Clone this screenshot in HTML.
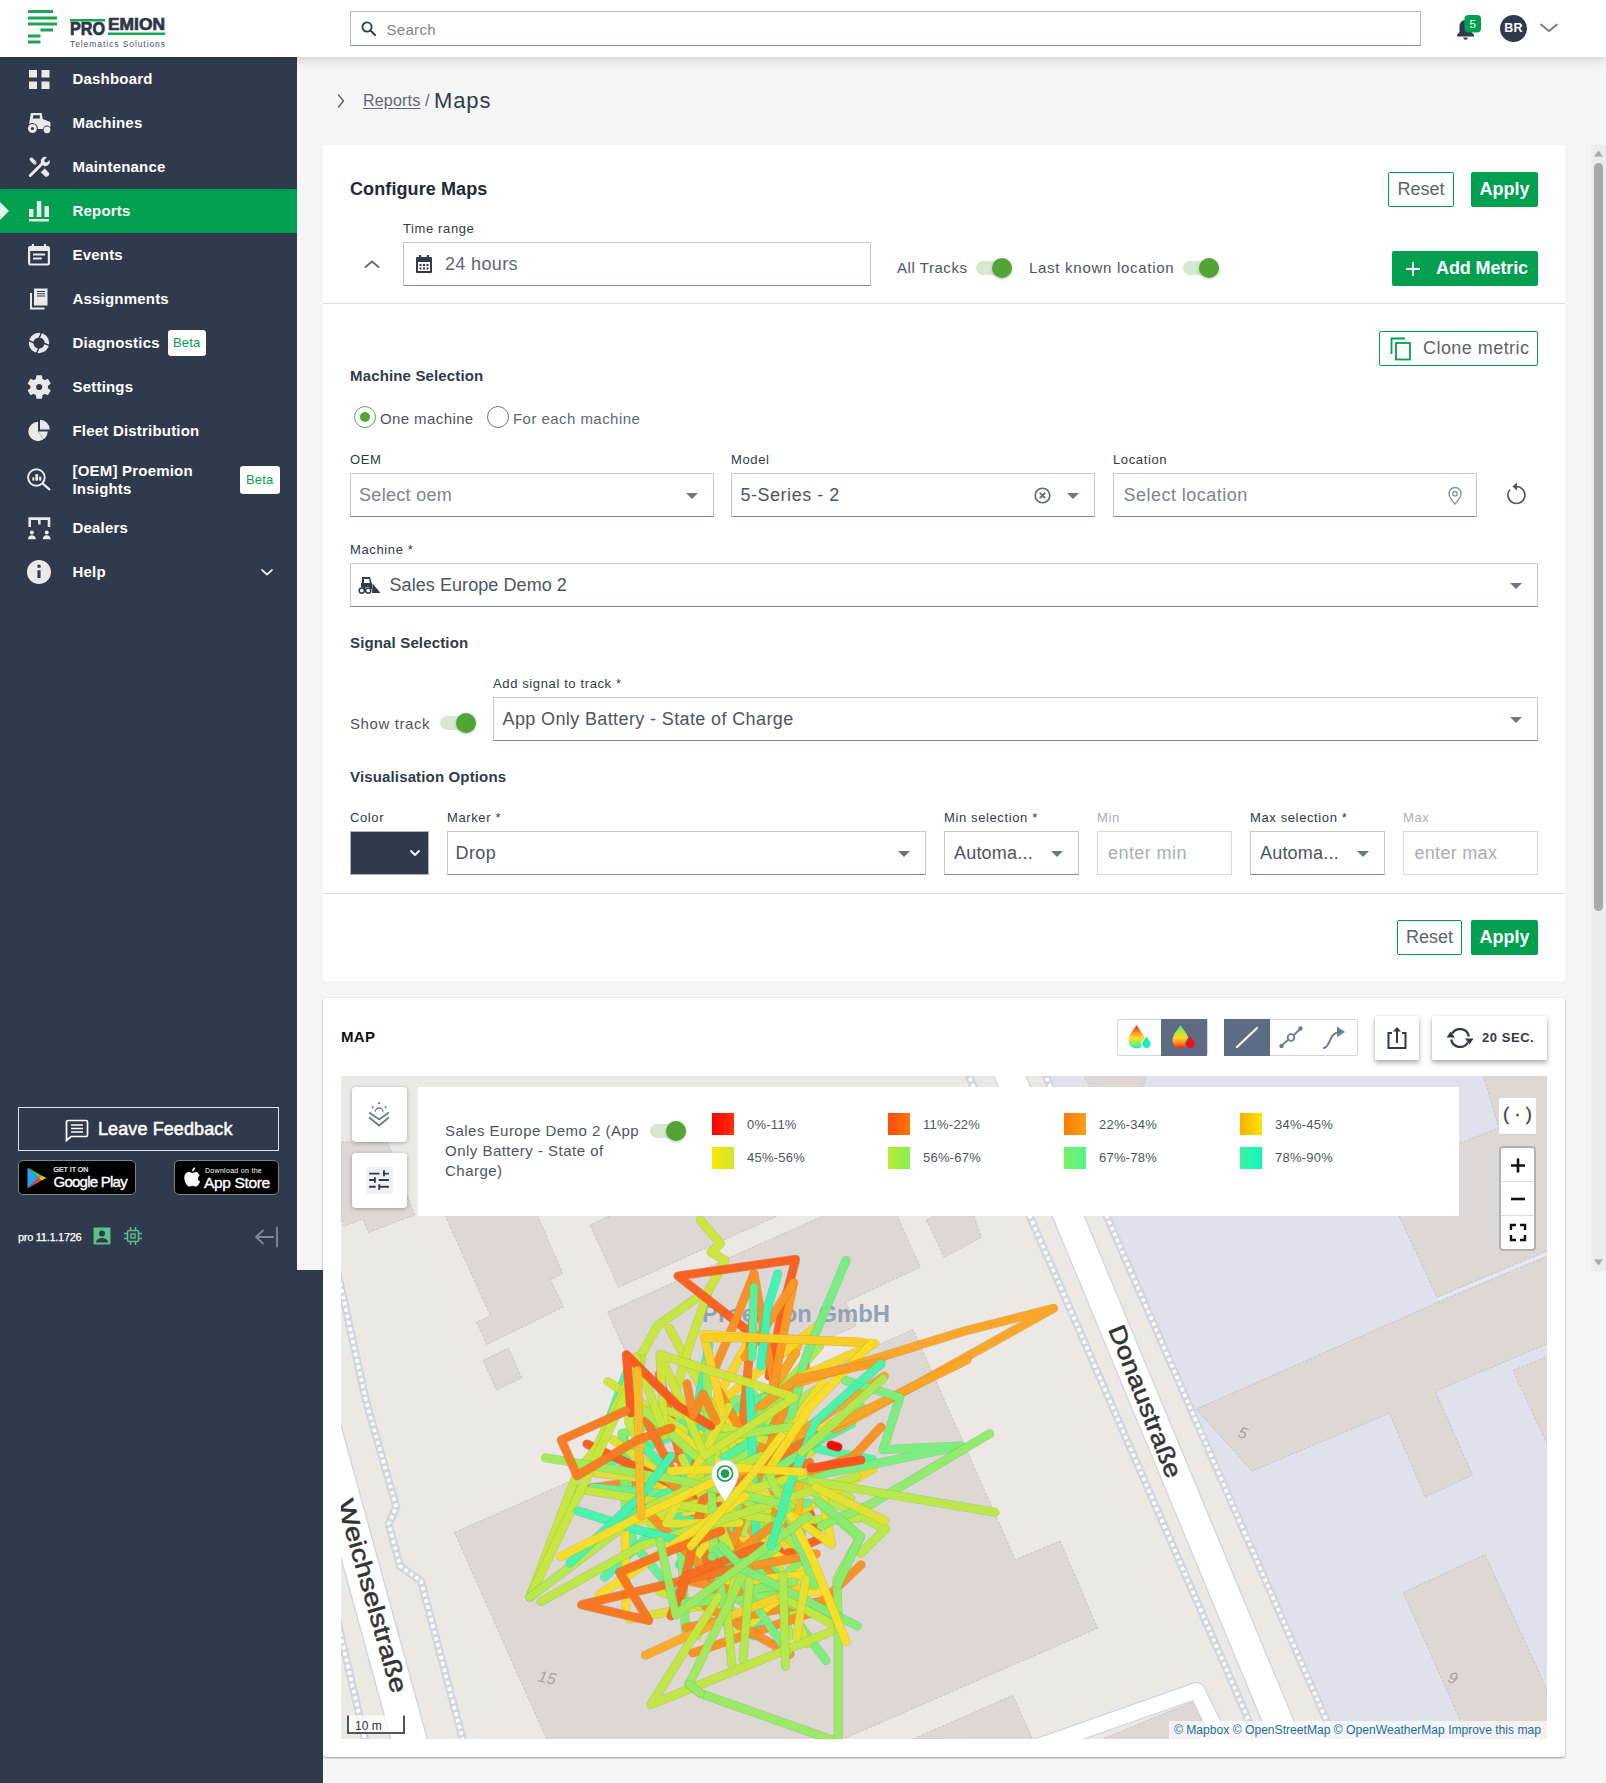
<!DOCTYPE html>
<html lang="en"><head><meta charset="utf-8"><title>Maps</title>
<style>
*{box-sizing:border-box;margin:0;padding:0}
html,body{width:1606px;height:1783px;overflow:hidden;background:#f5f5f5;font-family:"Liberation Sans",sans-serif;color:#2f3b4c}
.abs{position:absolute}
#hdr{position:absolute;left:0;top:0;width:1606px;height:57px;background:#fff;box-shadow:0 2px 10px rgba(0,0,0,.16);z-index:5}
#side{position:absolute;left:0;top:57px;width:297px;height:1213px;background:#2f3b4c;z-index:4}
#side2{position:absolute;left:0;top:1270px;width:323px;height:513px;background:#2f3b4c;z-index:4}
.nav{position:absolute;left:0;width:297px;height:44px;color:#fff;font-weight:700;font-size:15px;letter-spacing:.2px}
.nav span.t{position:absolute;left:72.5px;top:13px;line-height:18px;white-space:nowrap}
.nav svg{position:absolute;left:27px;top:10px;width:24px;height:24px;fill:#e9e9ea}
.nav.act{background:#00a050}
.beta{position:absolute;background:#fff;color:#00a050;font-weight:400;font-size:13px;border-radius:3px;height:26px;line-height:26px;padding:0 5px}
#search{position:absolute;left:350px;top:11px;width:1071px;height:35px;border:1px solid #b5bcc6;border-bottom-color:#7c8797;background:#fff}
#search span{position:absolute;left:35.500px;top:8.500px;font-size:15px;color:#7b8594;letter-spacing:.3px}
.card{position:absolute;background:#fff}
.lbl{position:absolute;font-size:13px;color:#2f3b4c;line-height:16px;white-space:nowrap;letter-spacing:.62px;margin-top:.5px}
.sec{position:absolute;font-size:15px;font-weight:700;color:#2f3b4c;line-height:18px;white-space:nowrap;letter-spacing:.15px}
.fld{position:absolute;height:44px;border:1px solid #c3c9d2;border-bottom:1px solid #7c8797;background:#fff;font-size:18px;color:#4b5566;line-height:42px;padding-left:9px;white-space:nowrap;letter-spacing:.2px}
.fld.ph{color:#7b8594}
.fld.dis{border-color:#d5d9e0;color:#a7aeb9}
.caret{position:absolute;width:0;height:0;border-left:6px solid transparent;border-right:6px solid transparent;border-top:6px solid #6b7686}
.tog{position:absolute;width:36px;height:14px;border-radius:7px;background:#d6e9cf}
.tog i{position:absolute;right:.5px;top:-3px;width:20px;height:20px;border-radius:50%;background:#52a535;box-shadow:0 1px 3px rgba(0,0,0,.25)}
.btn{position:absolute;height:35px;border-radius:2px;font-size:18px;line-height:33px;text-align:center;white-space:nowrap}
.btn.o{border:1px solid #00a050;color:#5a6474;background:#fff}
.btn.g{background:#00a050;color:#fff;font-weight:700;line-height:35px}
</style></head><body>
<div id="hdr">
<svg class="abs" style="left:0;top:0" width="180" height="57" viewBox="0 0 180 57">
<g fill="#1aa651"><rect x="28" y="10" width="25" height="3"/><rect x="28" y="16.5" width="29" height="3"/><rect x="28" y="22.5" width="29" height="3"/><rect x="40.5" y="28.5" width="12.5" height="3"/><rect x="28" y="34.500" width="12.500" height="3"/><rect x="28" y="40.5" width="12.5" height="3"/>
<rect x="70" y="19" width="35" height="2.5"/><rect x="108" y="32.500" width="57" height="2.500"/></g>
<text x="70" y="35" font-family="Liberation Sans,sans-serif" font-weight="700" font-size="17.500" fill="#2b3648" stroke="#2b3648" stroke-width=".7" textLength="35" lengthAdjust="spacingAndGlyphs">PRO</text>
<text x="108" y="30.300" font-family="Liberation Sans,sans-serif" font-weight="700" font-size="17" fill="#2b3648" stroke="#2b3648" stroke-width=".7" textLength="57" lengthAdjust="spacingAndGlyphs">EMION</text>
<text x="70" y="46.500" font-family="Liberation Sans,sans-serif" font-size="8.500" fill="#4a5363" textLength="95" lengthAdjust="spacing">Telematics Solutions</text>
</svg>

<div id="search"><svg class="abs" style="left:9px;top:8px" width="17" height="17" viewBox="0 0 17 17"><circle cx="7" cy="7" r="4.6" fill="none" stroke="#2f3b4c" stroke-width="1.8"/><path d="M10.4 10.4L15 15" stroke="#2f3b4c" stroke-width="2" stroke-linecap="round"/></svg><span>Search</span></div>
<svg class="abs" style="left:1450px;top:10px" width="40" height="36" viewBox="0 0 40 36">
<path d="M15.500 10c-3.800 0-6 3-6 6.500v5.500l-2.500 3v1.500h17V25l-2.500-3v-5.500c0-3.500-2.200-6.500-6-6.500zM13.300 27.500a2.200 2.200 0 0 0 4.400 0z" fill="#2f3b4c"/>
<rect x="14.500" y="5" width="16.500" height="17.500" rx="4" fill="#00a050"/>
<text x="22.750" y="18" text-anchor="middle" font-family="Liberation Sans,sans-serif" font-size="11.500" fill="#fff">5</text>
</svg>
<div class="abs" style="left:1500px;top:14.500px;width:27px;height:27px;border-radius:50%;background:#2f3b4c;color:#fff;font-weight:700;font-size:12.500px;line-height:27px;text-align:center;letter-spacing:.2px">BR</div>
<svg class="abs" style="left:1538px;top:20px" width="22" height="16" viewBox="0 0 22 16"><path d="M3 4.500l8 6.500 8-6.500" fill="none" stroke="#6f7a8a" stroke-width="1.800" stroke-linecap="round" stroke-linejoin="round"/></svg>

</div>
<div id="side">
<div class="nav" style="top:0"><svg viewBox="0 0 24 24"><rect x="2" y="3" width="8" height="7.500"/><rect x="14.500" y="3" width="8" height="7.500"/><rect x="2" y="14.500" width="8" height="7.500"/><rect x="14.500" y="14.500" width="8" height="7.500"/></svg><span class="t">Dashboard</span></div>
<div class="nav" style="top:44px"><svg viewBox="0 0 24 24"><path d="M3.900 1.900h10.800l1 6 7.600 3.100.2 4.700h-.8a4.100 4.100 0 0 0-6.800 2.300H10.800a5.500 5.500 0 0 0-8.800-4.800zM6.400 4.200L5.800 7.600h7v-3.400z" fill-rule="evenodd"/><circle cx="5.400" cy="17.500" r="3.050" fill="none" stroke="#e9e9ea" stroke-width="2.900"/><circle cx="20" cy="18.800" r="3.400"/></svg><span class="t">Machines</span></div>
<div class="nav" style="top:88px"><svg viewBox="0 0 24 24"><path d="M3.300 20.500L15.600 8.200" stroke="#e9e9ea" stroke-width="3" stroke-linecap="round"/><path d="M13.800 7.800a4.700 4.700 0 0 1 6.200-5.600l-2.700 2.900.5 2 2 .5 2.800-2.700a4.700 4.700 0 0 1-5.600 6.100z"/><path d="M4.400 4.400l3.300 3.300" stroke="#e9e9ea" stroke-width="3.700" stroke-linecap="round"/><path d="M13.700 17.200l4-3.600 4.700 4.600-.9 2.700-2.700 1.200z"/></svg><span class="t">Maintenance</span></div>
<div class="nav act" style="top:132px"><svg class="abs" style="left:0;top:10px;width:10px;height:24px" viewBox="0 0 10 24"><path d="M0 3l9 9-9 9z" fill="#e6f5ec"/></svg><svg viewBox="0 0 24 24"><rect x="2" y="10" width="4.500" height="8"/><rect x="9.800" y="2" width="4.500" height="16"/><rect x="17.500" y="7" width="4.500" height="11"/><rect x="2" y="20" width="20" height="2.500"/></svg><span class="t">Reports</span></div>
<div class="nav" style="top:176px"><svg viewBox="0 0 24 24"><path transform="translate(12 0) scale(1.100 1) translate(-12 0)" d="M17.500 10.500H6.500v2h11zM20 3h-1.500V1h-2v2h-9V1h-2v2H4c-1.100 0-2 .9-2 2v15.500c0 1.100.9 2 2 2h16c1.100 0 2-.9 2-2V5c0-1.100-.9-2-2-2zm0 17.500H4V8h16zm-5.500-6H6.500v2h8z"/></svg><span class="t">Events</span></div>
<div class="nav" style="top:220px"><svg viewBox="0 0 24 24"><path d="M7 1.500h13.500v17H7zM10 4v1h8V4zm0 2.200v1h8v-1zm0 2.200v1h8v-1z" fill-rule="evenodd"/><path d="M3 6h2v14.500h12.500v2H3z"/></svg><span class="t">Assignments</span></div>
<div class="nav" style="top:264px"><svg viewBox="0 0 24 24"><circle cx="12" cy="12" r="7.900" fill="none" stroke="#e9e9ea" stroke-width="4.600"/><path d="M12.00 7.50L14.78 0.84M16.50 12.00L23.16 14.78M12.00 16.50L9.22 23.16M7.50 12.00L0.84 9.22" stroke="#2f3b4c" stroke-width="1.400" fill="none"/></svg><span class="t">Diagnostics</span><span class="beta" style="left:168px;top:9px">Beta</span></div>
<div class="nav" style="top:308px"><svg viewBox="0 0 24 24" style="overflow:visible"><path d="M9.50 4.15L9.95 0.93L14.45 0.93L14.90 4.15L17.65 5.74L20.66 4.51L22.92 8.41L20.35 10.42L20.35 13.58L22.92 15.59L20.66 19.49L17.65 18.26L14.90 19.85L14.45 23.07L9.95 23.07L9.50 19.85L6.75 18.26L3.74 19.49L1.48 15.59L4.05 13.58L4.05 10.42L1.48 8.41L3.74 4.51L6.75 5.74zM15.900 12a3.700 3.700 0 1 0-7.400 0 3.700 3.700 0 1 0 7.400 0z" fill-rule="evenodd" stroke="#e9e9ea" stroke-width="1.200" stroke-linejoin="round"/></svg><span class="t">Settings</span></div>
<div class="nav" style="top:352px"><svg viewBox="0 0 24 24" style="overflow:visible"><path d="M11 12.500V2.800A9.700 9.700 0 1 0 20.700 12.500z"/><path d="M13 10.500V.8A9.700 9.700 0 0 1 22.700 10.500z"/><path d="M11 12.500l5.700 8" stroke="#2f3b4c" stroke-width=".5" opacity=".6"/></svg><span class="t">Fleet Distribution</span></div>
<div class="nav" style="top:396px;height:53px"><svg viewBox="0 0 24 24" style="top:15px;overflow:visible"><circle cx="9.400" cy="9.500" r="8.300" fill="none" stroke="#e9e9ea" stroke-width="2"/><path d="M15.800 15.600l6.600 5.800" stroke="#e9e9ea" stroke-width="2.200" stroke-linecap="round"/><rect x="5.300" y="9.300" width="2" height="3.300"/><rect x="8.300" y="6.100" width="2.800" height="6.500"/><rect x="12.100" y="8.600" width="2.200" height="4"/></svg><span class="t" style="top:9px;white-space:normal;width:150px">[OEM] Proemion Insights</span><span class="beta" style="left:240px;top:13px;height:28px;line-height:28px;padding:0 6px">Beta</span></div>
<div class="nav" style="top:449px"><svg viewBox="0 0 24 24" style="overflow:visible"><path d="M1.400 1.300h21.900V11h-2.600V3.900h-7.100v4.500h-2.500V3.900H4V11H1.400z"/><circle cx="4.900" cy="16.600" r="2"/><path d="M1 23.200c0-3 1.800-4 3.900-4s3.900 1 3.900 4z"/><circle cx="19.700" cy="16.600" r="2"/><path d="M15.800 23.200c0-3 1.800-4 3.900-4s3.900 1 3.900 4z"/></svg><span class="t">Dealers</span></div>
<div class="nav" style="top:493px"><svg viewBox="0 0 24 24"><path transform="translate(12 12) scale(1.200) translate(-12 -12)" d="M12 2C6.480 2 2 6.480 2 12s4.480 10 10 10 10-4.480 10-10S17.520 2 12 2zm1.300 15h-2.600v-6.500h2.600zm0-8.500h-2.600V6h2.600z"/></svg><span class="t">Help</span><svg style="left:258px;top:13px;width:18px;height:18px;fill:none" viewBox="0 0 18 18"><path d="M4 7l5 4.500L14 7" stroke="#e9e9ea" stroke-width="1.700" stroke-linecap="round" stroke-linejoin="round"/></svg></div>
<div class="abs" style="left:18px;top:1050px;width:261px;height:44px;border:1px solid #dfe2e6;color:#fff;font-size:18px;font-weight:700;line-height:42px;white-space:nowrap"><svg class="abs" style="left:46px;top:10px" width="24" height="24" viewBox="0 0 24 24"><path d="M3 2.500h18c.8 0 1.500.7 1.500 1.500v13c0 .8-.7 1.500-1.500 1.500H6l-4.500 4V4c0-.8.700-1.500 1.500-1.500z" fill="none" stroke="#fff" stroke-width="1.700"/><path d="M6 7h12M6 10.500h12M6 14h12" stroke="#fff" stroke-width="1.500"/></svg><span class="abs" style="left:79px;top:0;font-weight:400;-webkit-text-stroke:.5px #fff;letter-spacing:.1px">Leave Feedback</span></div>
<div class="abs" style="left:18px;top:1103px;width:118px;height:35px;background:#000;border:1px solid #7e8186;border-radius:5px;color:#fff"><svg class="abs" style="left:7px;top:5px" width="22" height="24" viewBox="0 0 22 24"><path d="M1.500 1.500l11 10.500-11 10.500z" fill="#2ea0f5"/><path d="M1.500 1.500l14 8-3 2.500z" fill="#3bd05a"/><path d="M1.500 22.500l14-8-3-2.500z" fill="#ea4335"/><path d="M15.500 9.500l5 2.500-5 2.500-3-2.500z" fill="#fbbc04"/></svg><span class="abs" style="left:34.500px;top:4px;font-size:7px;line-height:9px;letter-spacing:0;white-space:nowrap;-webkit-text-stroke:.2px #fff">GET IT ON</span><span class="abs" style="left:34.500px;top:10.500px;font-size:15px;line-height:19px;white-space:nowrap;letter-spacing:-.75px;-webkit-text-stroke:.35px #fff">Google Play</span></div>
<div class="abs" style="left:174px;top:1103px;width:105px;height:35px;background:#000;border:1px solid #7e8186;border-radius:5px;color:#fff"><svg class="abs" style="left:5.500px;top:4px" width="22" height="26.400" viewBox="0 0 20 24"><path d="M13.800 6.300c-1.400 0-2.600.9-3.300.9-.8 0-1.900-.8-3.200-.8C5 6.400 3 8.300 3 11.700c0 3.800 2.600 8 4.500 8 .9 0 1.700-.8 2.900-.8 1.200 0 1.700.8 2.900.8 1.800 0 3.500-3 4-4.700-2-.8-2.800-3.800-.3-5.500-.8-1.600-2.200-3.200-3.200-3.200zM12.800 2c-1.800.4-2.900 1.900-2.700 3.800 1.700-.1 3-1.900 2.700-3.800z" fill="#fff"/></svg><span class="abs" style="left:30px;top:5px;font-size:7px;line-height:9px;letter-spacing:.3px;white-space:nowrap">Download on the</span><span class="abs" style="left:29px;top:11.500px;font-size:15.500px;line-height:19px;white-space:nowrap;letter-spacing:-.35px;-webkit-text-stroke:.35px #fff">App Store</span></div>
<div class="abs" style="left:18px;top:1173px;font-size:11px;line-height:14px;color:#fff;white-space:nowrap;letter-spacing:-.28px;-webkit-text-stroke:.25px #fff">pro 11.1.1726</div>
<svg class="abs" style="left:93px;top:1170px" width="18" height="18" viewBox="0 0 18 18"><rect x=".5" y=".5" width="17" height="17" rx="1" fill="#5bc08a"/><circle cx="9" cy="6.500" r="3" fill="#2f3b4c"/><path d="M3 15.500c0-3 3-4.500 6-4.500s6 1.500 6 4.500z" fill="#2f3b4c"/></svg>
<svg class="abs" style="left:124px;top:1170px" width="18" height="18" viewBox="0 0 18 18" fill="none" stroke="#5bc08a"><rect x="3.500" y="3.500" width="11" height="11" rx="1.500" stroke-width="1.600"/><rect x="7" y="7" width="4" height="4" stroke-width="1.400"/><path d="M6.500 0v3M11.500 0v3M6.500 15v3M11.500 15v3M0 6.500h3M0 11.500h3M15 6.500h3M15 11.500h3" stroke-width="1.400"/></svg>
<svg class="abs" style="left:253px;top:1169px" width="26" height="22" viewBox="0 0 26 22"><path d="M3 11h17M3 11l7-6.500M3 11l7 6.500M24 1.500v19" fill="none" stroke="#7f8a99" stroke-width="1.800" stroke-linecap="round"/></svg>

</div>
<div id="side2"></div>
<!-- breadcrumb -->
<svg class="abs" style="left:334px;top:92px" width="14" height="18" viewBox="0 0 14 18"><path d="M4.500 3l5 6-5 6" fill="none" stroke="#5d6878" stroke-width="1.500" stroke-linecap="round" stroke-linejoin="round"/></svg>
<div class="abs" style="left:363px;top:91px;font-size:16px;line-height:20px;color:#5d6878;white-space:nowrap;letter-spacing:.2px"><span style="text-decoration:underline;text-underline-offset:2px">Reports</span> /</div>
<div class="abs" style="left:434px;top:87px;font-size:22px;line-height:28px;color:#2f3b4c;white-space:nowrap;letter-spacing:.9px">Maps</div>
<!-- card 1 -->
<div class="card" style="left:323px;top:145px;width:1242px;height:836px"></div>
<div class="abs" style="left:323px;top:303px;width:1242px;height:1px;background:#d9dee5"></div>
<div class="abs" style="left:323px;top:893px;width:1242px;height:1px;background:#d9dee5"></div>
<div class="abs" style="left:350px;top:178px;font-size:18px;font-weight:700;line-height:22px;color:#1f2a3a;white-space:nowrap;letter-spacing:.1px">Configure Maps</div>
<div class="btn o" style="left:1388px;top:172px;width:66px">Reset</div>
<div class="btn g" style="left:1471px;top:172px;width:67px">Apply</div>
<div class="lbl" style="left:403px;top:220px">Time range</div>
<svg class="abs" style="left:362px;top:256px" width="20" height="16" viewBox="0 0 20 16"><path d="M3.500 11l6.500-5.500 6.500 5.500" fill="none" stroke="#5d6878" stroke-width="1.700" stroke-linecap="round" stroke-linejoin="round"/></svg>
<div class="fld" style="left:403px;top:242px;width:468px;padding-left:41px;color:#5d6878;letter-spacing:.35px">24 hours<svg class="abs" style="left:11px;top:11px" width="18" height="20" viewBox="0 0 18 20"><path d="M2 3h14a1 1 0 0 1 1 1v14a1 1 0 0 1-1 1H2a1 1 0 0 1-1-1V4a1 1 0 0 1 1-1zm1 5v9h12V8z" fill="#2f3b4c" fill-rule="evenodd"/><rect x="4" y="1" width="2.200" height="3.500" fill="#2f3b4c"/><rect x="11.800" y="1" width="2.200" height="3.500" fill="#2f3b4c"/><g fill="#2f3b4c"><rect x="4.500" y="10" width="2" height="2"/><rect x="8" y="10" width="2" height="2"/><rect x="11.500" y="10" width="2" height="2"/><rect x="4.500" y="13.500" width="2" height="2"/><rect x="8" y="13.500" width="2" height="2"/><rect x="11.500" y="13.500" width="2" height="2"/></g></svg></div>
<div class="abs" style="left:897px;top:259px;font-size:15px;line-height:18px;color:#4b5566;white-space:nowrap;letter-spacing:.55px">All Tracks</div>
<div class="tog" style="left:976px;top:261px"><i></i></div>
<div class="abs" style="left:1029px;top:259px;font-size:15px;line-height:18px;color:#4b5566;white-space:nowrap;letter-spacing:.72px">Last known location</div>
<div class="tog" style="left:1183px;top:261px"><i></i></div>
<div class="btn g" style="left:1392px;top:251px;width:146px;text-align:left;padding-left:44px;letter-spacing:-.1px">Add Metric<svg class="abs" style="left:12px;top:9px" width="18" height="18" viewBox="0 0 18 18"><path d="M9 2v14M2 9h14" stroke="#fff" stroke-width="1.800"/></svg></div>
<div class="btn o" style="left:1379px;top:331px;width:159px;height:35px;text-align:left;padding-left:43px;letter-spacing:.45px">Clone metric<svg class="abs" style="left:10px;top:5px" width="22" height="24" viewBox="0 0 22 24"><path d="M1.500 17V1.500H15" fill="none" stroke="#00a050" stroke-width="1.800"/><rect x="6" y="6" width="14" height="16.500" fill="none" stroke="#00a050" stroke-width="1.800"/></svg></div>
<div class="sec" style="left:350px;top:367px">Machine Selection</div>
<div class="abs" style="left:354px;top:406px;width:22px;height:22px;border-radius:50%;border:1.500px solid #4caf50;background:#fff"><i class="abs" style="left:4.500px;top:4.500px;width:10px;height:10px;border-radius:50%;background:#52a535"></i></div>
<div class="abs" style="left:380px;top:410px;font-size:15px;line-height:18px;color:#4b5566;white-space:nowrap;letter-spacing:.4px">One machine</div>
<div class="abs" style="left:486.500px;top:405.500px;width:22px;height:22px;border-radius:50%;border:1px solid #6b7686;background:#fff"></div>
<div class="abs" style="left:513px;top:410px;font-size:15px;line-height:18px;color:#5d6878;white-space:nowrap;letter-spacing:.45px">For each machine</div>
<div class="lbl" style="left:350px;top:451px">OEM</div>
<div class="lbl" style="left:731px;top:451px">Model</div>
<div class="lbl" style="left:1113px;top:451px">Location</div>
<div class="fld ph" style="left:350px;top:473px;width:364px;padding-left:8px;letter-spacing:.31px">Select oem<i class="caret" style="right:15px;top:19px"></i></div>
<div class="fld" style="left:731px;top:473px;width:364px;padding-left:8.500px;letter-spacing:.52px">5-Series - 2<svg class="abs" style="left:301px;top:12px" width="19" height="19" viewBox="0 0 19 19"><circle cx="9.500" cy="9.500" r="7.300" fill="none" stroke="#5d6878" stroke-width="1.600"/><path d="M6.800 6.800l5.400 5.400M12.200 6.800l-5.400 5.400" stroke="#5d6878" stroke-width="1.700"/></svg><i class="caret" style="right:15px;top:19px"></i></div>
<div class="fld ph" style="left:1113px;top:473px;width:364px;padding-left:9.500px;letter-spacing:.47px">Select location<svg class="abs" style="left:332px;top:11px" width="18" height="22" viewBox="0 0 18 22"><path d="M9 2.500c-3.500 0-6 2.600-6 6 0 4 6 10.500 6 10.500s6-6.500 6-10.500c0-3.400-2.500-6-6-6z" fill="none" stroke="#8a94a3" stroke-width="1.400"/><circle cx="9" cy="8.700" r="2.200" fill="none" stroke="#8a94a3" stroke-width="1.400"/></svg></div>
<svg class="abs" style="left:1503px;top:481px" width="26" height="26" viewBox="0 0 26 26"><path d="M13.500 5.500a8.500 8.500 0 1 1-7 3.600" fill="none" stroke="#4b5566" stroke-width="1.600" stroke-linecap="round"/><path d="M14 1.500v8l-4.500-4z" fill="#4b5566"/></svg>
<div class="lbl" style="left:350px;top:541px">Machine *</div>
<div class="fld" style="left:350px;top:563px;width:1188px;padding-left:38.500px;letter-spacing:.07px">Sales Europe Demo 2<svg class="abs" style="left:7px;top:11px" width="24" height="22" viewBox="0 0 24 22"><path d="M4 2h8l2 7v5h-1.500a3 3 0 0 0-5.800 0H6a3 3 0 0 0-3-2V8h1zm2 2v4h6l-1-4z" fill="#2f3b4c" fill-rule="evenodd"/><circle cx="3.800" cy="15.500" r="2.600" fill="none" stroke="#2f3b4c" stroke-width="1.500"/><circle cx="10.200" cy="15.500" r="2.600" fill="none" stroke="#2f3b4c" stroke-width="1.500"/><path d="M14.500 8.500l8 9.500h-8.500z" fill="#2f3b4c"/></svg><i class="caret" style="right:15px;top:19px"></i></div>
<div class="sec" style="left:350px;top:634px">Signal Selection</div>
<div class="lbl" style="left:493px;top:675px">Add signal to track *</div>
<div class="abs" style="left:350px;top:715px;font-size:15px;line-height:18px;color:#4b5566;white-space:nowrap;letter-spacing:.6px">Show track</div>
<div class="tog" style="left:440px;top:716px"><i></i></div>
<div class="fld" style="left:493px;top:697px;width:1045px;padding-left:8.500px;letter-spacing:.38px">App Only Battery - State of Charge<i class="caret" style="right:15px;top:19px"></i></div>
<div class="sec" style="left:350px;top:768px">Visualisation Options</div>
<div class="lbl" style="left:350px;top:809px">Color</div>
<div class="lbl" style="left:447px;top:809px">Marker *</div>
<div class="lbl" style="left:944px;top:809px">Min selection *</div>
<div class="lbl" style="left:1097px;top:809px;color:#a7aeb9">Min</div>
<div class="lbl" style="left:1250px;top:809px">Max selection *</div>
<div class="lbl" style="left:1403px;top:809px;color:#a7aeb9">Max</div>
<div class="abs" style="left:350px;top:831px;width:79px;height:44px;background:#2f3b4c;border:1px solid #a9b1bd"><svg class="abs" style="left:57px;top:14px" width="14" height="14" viewBox="0 0 14 14"><path d="M3 5l4 4 4-4" fill="none" stroke="#fff" stroke-width="1.800" stroke-linecap="round" stroke-linejoin="round"/></svg></div>
<div class="fld" style="left:447px;top:831px;width:479px;padding-left:7.500px;letter-spacing:.4px">Drop<i class="caret" style="right:15px;top:19px"></i></div>
<div class="fld" style="left:944px;top:831px;width:135px;padding-left:9px">Automa...<i class="caret" style="right:15px;top:19px"></i></div>
<div class="fld dis" style="left:1097px;top:831px;width:135px;padding-left:10px;letter-spacing:.43px">enter min</div>
<div class="fld" style="left:1250px;top:831px;width:135px;padding-left:9px">Automa...<i class="caret" style="right:15px;top:19px"></i></div>
<div class="fld dis" style="left:1403px;top:831px;width:135px;padding-left:10.500px;letter-spacing:.3px">enter max</div>
<div class="btn o" style="left:1397px;top:920px;width:65px">Reset</div>
<div class="btn g" style="left:1471px;top:920px;width:67px">Apply</div>
<!-- scrollbar -->
<div class="abs" style="left:1591px;top:145px;width:15px;height:1126px;background:#ececec"></div>
<div class="abs" style="left:1594px;top:163px;width:9px;height:748px;background:#a9a9a9;border-radius:5px"></div>
<svg class="abs" style="left:1591px;top:145px" width="15" height="16" viewBox="0 0 15 16"><path d="M3 11.500l4.500-6 4.500 6z" fill="#a9a9a9"/></svg>
<svg class="abs" style="left:1591px;top:1255px" width="15" height="16" viewBox="0 0 15 16"><path d="M3 4.500l4.500 6 4.500-6z" fill="#a9a9a9"/></svg>
<!-- card 2 -->
<div class="card" style="left:323px;top:998px;width:1242px;height:759px;border-radius:3px;box-shadow:0 1px 2px rgba(0,0,0,.35),0 0 2px rgba(0,0,0,.12)"></div>
<div class="abs" style="left:341px;top:1028px;font-size:15px;font-weight:700;line-height:18px;color:#111;letter-spacing:.3px">MAP</div>
<!-- toolbar -->
<div class="abs" style="left:1117px;top:1019px;width:91px;height:37px;border:1px solid #d4d8de;border-radius:2px;background:#fff"></div>
<div class="abs" style="left:1161px;top:1019px;width:46px;height:37px;background:#5d6c84"></div>
<svg class="abs" style="left:1126px;top:1023px" width="28" height="28" viewBox="0 0 28 28"><defs><linearGradient id="dg" x1="0" y1="0" x2="0" y2="1"><stop offset="0" stop-color="#ff1a1a"/><stop offset=".3" stop-color="#ff8a1a"/><stop offset=".55" stop-color="#ffe020"/><stop offset=".8" stop-color="#7cf070"/><stop offset="1" stop-color="#18f0b0"/></linearGradient><linearGradient id="dg2" x1="0" y1="0" x2="0" y2="1"><stop offset="0" stop-color="#30e890"/><stop offset=".3" stop-color="#b0ea40"/><stop offset=".55" stop-color="#ffd820"/><stop offset=".8" stop-color="#ff7a1a"/><stop offset="1" stop-color="#ff1a1a"/></linearGradient></defs><path d="M10.500 2C7.500 7 2.500 12 2.500 17.500a8 8 0 0 0 16 0C18.500 12 13.500 7 10.500 2z" fill="url(#dg)"/><path d="M20.500 12.500c-2 3.200-4.800 5.500-4.800 8.300a4.800 4.800 0 0 0 9.600 0c0-2.800-2.800-5.100-4.800-8.300z" fill="#1cf0b4" stroke="#fff" stroke-width="1.200"/></svg>
<svg class="abs" style="left:1170px;top:1023px" width="28" height="28" viewBox="0 0 28 28"><path d="M10.500 2C7.500 7 2.500 12 2.500 17.500a8 8 0 0 0 16 0C18.500 12 13.500 7 10.500 2z" fill="url(#dg2)"/><path d="M20.500 12.500c-2 3.200-4.800 5.500-4.800 8.300a4.800 4.800 0 0 0 9.600 0c0-2.800-2.800-5.100-4.800-8.300z" fill="#ee1118" stroke="#5d6c84" stroke-width="1.200"/></svg>
<div class="abs" style="left:1224px;top:1019px;width:134px;height:37px;border:1px solid #d4d8de;border-radius:2px;background:#fff"></div>
<div class="abs" style="left:1224px;top:1019px;width:46px;height:37px;background:#5d6c84"></div>
<svg class="abs" style="left:1233px;top:1024px" width="28" height="28" viewBox="0 0 28 28"><path d="M4 23L24 4" stroke="#fff" stroke-width="2.200" stroke-linecap="round"/></svg>
<svg class="abs" style="left:1277px;top:1024px" width="28" height="28" viewBox="0 0 28 28" fill="none" stroke="#6d7b92" stroke-width="1.800"><path d="M4 22l7-6M17 11l7-7" stroke-linecap="round"/><circle cx="14" cy="13.500" r="3.300"/><circle cx="4.500" cy="22" r="1.300" fill="#6d7b92"/><circle cx="23.500" cy="4.500" r="1.300" fill="#6d7b92"/></svg>
<svg class="abs" style="left:1320px;top:1024px" width="28" height="28" viewBox="0 0 28 28"><path d="M4 24c6 0 5-15 15-16" fill="none" stroke="#6d7b92" stroke-width="2" stroke-linecap="round"/><path d="M17 2.500l8 5.500-8 5z" fill="#6d7b92"/></svg>
<div class="abs" style="left:1375px;top:1016px;width:44px;height:44px;background:#fff;box-shadow:0 3px 5px rgba(0,0,0,.3),0 0 2px rgba(0,0,0,.15);border-radius:1px"></div>
<svg class="abs" style="left:1385px;top:1025px" width="24" height="26" viewBox="0 0 24 26"><path d="M7 8H3.500v15h17V8H17" fill="none" stroke="#2f3b4c" stroke-width="2"/><path d="M12 18V3.500" stroke="#2f3b4c" stroke-width="2"/><path d="M8 6.500l4-4.500 4 4.500z" fill="#2f3b4c"/></svg>
<div class="abs" style="left:1432px;top:1016px;width:115px;height:44px;background:#fff;box-shadow:0 3px 5px rgba(0,0,0,.3),0 0 2px rgba(0,0,0,.15);border-radius:1px"></div>
<svg class="abs" style="left:1446px;top:1024px" width="28" height="28" viewBox="0 0 28 28"><path d="M22.800 12.500A9 9 0 0 0 6.200 9.500M5.200 15.500a9 9 0 0 0 16.600 3" fill="none" stroke="#2f3b4c" stroke-width="2.300"/><path d="M.5 13.500h8.500l-4.500-6zM27.500 14.500H19l4.500 6z" fill="#2f3b4c"/></svg>
<div class="abs" style="left:1482px;top:1030px;font-size:13px;font-weight:700;line-height:16px;color:#2f3b4c;letter-spacing:.55px;white-space:nowrap">20 SEC.</div>
<!--MAPSTART--><svg class="abs" style="left:341px;top:1076px" width="1206" height="663" viewBox="0 0 1206 663" font-family="Liberation Sans,sans-serif">
<rect width="1206" height="663" fill="#ece9e5"/>
<polygon points="709.1,0.0 1206.0,0.0 1206.0,663.0 998.2,663.0" fill="#dfe2ec"/>
<polygon points="86.0,100.0 179.0,100.0 196.8,140.2 221.7,197.5 209.2,203.7 222.4,231.1 145.7,268.5 135.7,246.0 149.4,239.8 104.6,140.2" fill="#ded8d5" stroke="#cbc3be" stroke-width="1" stroke-dasharray="3 1.5"/>
<polygon points="142.0,284.6 167.4,272.2 180.6,302.0 155.6,313.8" fill="#ded8d5" stroke="#cbc3be" stroke-width="1" stroke-dasharray="3 1.5"/>
<polygon points="0.0,66.0 46.0,66.0 52.0,78.0 62.0,108.0 73.5,139.0 27.4,156.4 22.0,143.0 3.0,150.0 0.0,143.0" fill="#ded8d5" stroke="#cbc3be" stroke-width="1" stroke-dasharray="3 1.5"/>
<polygon points="742.0,-2.0 806.0,-2.0 802.0,12.0 750.0,12.0" fill="#ded8d5" stroke="#cbc3be" stroke-width="1" stroke-dasharray="3 1.5"/>
<polygon points="249.0,149.0 277.7,211.2 445.0,136.0 420.0,80.0 400.0,80.0" fill="#ded8d5" stroke="#cbc3be" stroke-width="1" stroke-dasharray="3 1.5"/>
<polygon points="266.5,236.0 482.0,140.0 520.0,100.0 545.0,115.0 561.9,152.6 579.3,191.2 504.6,226.0 515.0,250.0 300.0,345.0 300.0,310.0" fill="#ded8d5" stroke="#cbc3be" stroke-width="1" stroke-dasharray="3 1.5"/>
<polygon points="585.6,143.9 600.0,136.0 632.9,140.0 640.3,161.4 603.0,181.3" fill="#ded8d5" stroke="#cbc3be" stroke-width="1" stroke-dasharray="3 1.5"/>
<polygon points="113.5,456.5 572.0,253.5 674.3,483.7 719.2,465.0 756.5,552.2 500.0,664.0 206.0,664.0" fill="#ded8d5" stroke="#cbc3be" stroke-width="1" stroke-dasharray="3 1.5"/>
<polygon points="572.0,663.0 671.9,619.4 691.8,664.0" fill="#ded8d5" stroke="#cbc3be" stroke-width="1" stroke-dasharray="3 1.5"/>
<polygon points="759.0,664.0 852.4,625.7 870.0,664.0" fill="#ded8d5" stroke="#cbc3be" stroke-width="1" stroke-dasharray="3 1.5"/>
<polygon points="1041.7,104.4 1118.0,67.5 1158.0,52.0 1142.0,-2.0 1208.0,-2.0 1208.0,173.8 1095.8,221.0" fill="#ded8d5" stroke="#cbc3be" stroke-width="1" stroke-dasharray="3 1.5"/>
<polygon points="855.2,333.2 911.0,395.0 1048.5,337.2 1084.3,421.0 1131.4,399.0 1094.3,315.3 1208.0,267.0 1208.0,179.6 1100.6,224.8" fill="#ded8d5" stroke="#cbc3be" stroke-width="1" stroke-dasharray="3 1.5"/>
<polygon points="1172.0,294.4 1208.0,280.0 1208.0,372.0" fill="#ded8d5" stroke="#cbc3be" stroke-width="1" stroke-dasharray="3 1.5"/>
<polygon points="1062.4,516.6 1144.0,478.7 1208.0,618.0 1208.0,664.0 1128.0,664.0" fill="#ded8d5" stroke="#cbc3be" stroke-width="1" stroke-dasharray="3 1.5"/>
<path d="M1097 223 L1208 177" stroke="#e9ebf1" stroke-width="1.5" fill="none"/>
<path d="M690 673 L855.700 614.600 L884 672" fill="none" stroke="#cfd5e0" stroke-width="17.500" stroke-linejoin="round"/>
<path d="M690 673 L855.700 614.600 L884 672" fill="none" stroke="#fff" stroke-width="15" stroke-linejoin="round"/>
<path d="M664.8 -10 L948.6 673" stroke="#cdd3de" stroke-width="31" fill="none" />
<path d="M664.8 -10 L948.6 673" stroke="#fff" stroke-width="28.6" fill="none" />
<path d="M623.6 -10 L920.0 673" stroke="#d0d5de" stroke-width="8" fill="none" />
<path d="M623.6 -10 L920.0 673" stroke="#fff" stroke-width="3.7" fill="none" stroke-dasharray="3.7 2.8"/>
<path d="M700.3 -10 L998.0 673" stroke="#d0d5de" stroke-width="8" fill="none" />
<path d="M700.3 -10 L998.0 673" stroke="#fff" stroke-width="3.7" fill="none" stroke-dasharray="3.7 2.8"/>
<path d="M-31.8 300 L78.2 700" stroke="#cdd3de" stroke-width="36.5" fill="none"/>
<path d="M-31.8 300 L78.2 700" stroke="#fff" stroke-width="34" fill="none"/>
<path d="M-6 188 L0 211 L24.8 324 L55.3 431 L47.7 448 L59 490 L80 505 L124 672" stroke="#d0d5de" stroke-width="8" fill="none" stroke-linejoin="round"/>
<path d="M-6 188 L0 211 L24.8 324 L55.3 431 L47.7 448 L59 490 L80 505 L124 672" stroke="#fff" stroke-width="3.700" fill="none" stroke-dasharray="3.7 2.8"/>
<path d="M-14 500 L26 672" stroke="#d0d5de" stroke-width="8" fill="none"/>
<path d="M-14 500 L26 672" stroke="#fff" stroke-width="3.700" fill="none" stroke-dasharray="3.7 2.8"/>
<text x="361" y="246" font-size="23" font-weight="700" fill="#93a1b8" textLength="188" lengthAdjust="spacingAndGlyphs">Proemion GmbH</text>
<text transform="translate(804 325.5) rotate(68.6)" text-anchor="middle" y="8" font-size="24" fill="#fff" stroke="#fff" stroke-width="3.500" stroke-opacity=".85" textLength="162" lengthAdjust="spacingAndGlyphs">Donaustraße</text>
<text transform="translate(804 325.5) rotate(68.6)" text-anchor="middle" y="8" font-size="24" fill="#333" stroke="#333" stroke-width=".5" textLength="162" lengthAdjust="spacingAndGlyphs">Donaustraße</text>
<text transform="translate(31 520) rotate(74)" text-anchor="middle" y="8" font-size="24" fill="#fff" stroke="#fff" stroke-width="3.500" stroke-opacity=".85" textLength="200" lengthAdjust="spacingAndGlyphs">Weichselstraße</text>
<text transform="translate(31 520) rotate(74)" text-anchor="middle" y="8" font-size="24" fill="#333" stroke="#333" stroke-width=".5" textLength="200" lengthAdjust="spacingAndGlyphs">Weichselstraße</text>
<text transform="translate(205 607) rotate(12)" text-anchor="middle" font-size="16" font-style="italic" fill="#aaa3a0">15</text>
<text transform="translate(900 362) rotate(20)" text-anchor="middle" font-size="16" font-style="italic" fill="#aaa3a0">5</text>
<text transform="translate(1110 607) rotate(20)" text-anchor="middle" font-size="16" font-style="italic" fill="#aaa3a0">9</text>
<path d="M465.4 427.8 L478.5 463.0 L440.0 480.0 L430.0 445.0 L465.4 427.8" fill="none" stroke="#cd4e18" stroke-width="9.200" stroke-linecap="round" stroke-linejoin="round" stroke-opacity=".55"/>
<path d="M465.4 427.8 L478.5 463.0 L440.0 480.0 L430.0 445.0 L465.4 427.8" fill="none" stroke="#fb601e" stroke-width="7.800" stroke-linecap="round" stroke-linejoin="round" stroke-opacity=".95"/>
<path d="M354.2 343.6 L412.6 438.1" fill="none" stroke="#8cbf44" stroke-width="9.200" stroke-linecap="round" stroke-linejoin="round" stroke-opacity=".55"/>
<path d="M354.2 343.6 L412.6 438.1" fill="none" stroke="#abea54" stroke-width="7.800" stroke-linecap="round" stroke-linejoin="round" stroke-opacity=".95"/>
<path d="M423.5 318.6 L367.6 528.6 L288.2 543.0" fill="none" stroke="#b7ba2a" stroke-width="9.200" stroke-linecap="round" stroke-linejoin="round" stroke-opacity=".55"/>
<path d="M423.5 318.6 L367.6 528.6 L288.2 543.0" fill="none" stroke="#e0e334" stroke-width="7.800" stroke-linecap="round" stroke-linejoin="round" stroke-opacity=".95"/>
<path d="M472.9 348.9 L404.4 506.3 L338.4 488.5" fill="none" stroke="#36c791" stroke-width="9.200" stroke-linecap="round" stroke-linejoin="round" stroke-opacity=".55"/>
<path d="M472.9 348.9 L404.4 506.3 L338.4 488.5" fill="none" stroke="#42f3b1" stroke-width="7.800" stroke-linecap="round" stroke-linejoin="round" stroke-opacity=".95"/>
<path d="M339.6 354.9 L463.8 403.1" fill="none" stroke="#c5b724" stroke-width="9.200" stroke-linecap="round" stroke-linejoin="round" stroke-opacity=".55"/>
<path d="M339.6 354.9 L463.8 403.1" fill="none" stroke="#f1e02c" stroke-width="7.800" stroke-linecap="round" stroke-linejoin="round" stroke-opacity=".95"/>
<path d="M371.8 334.3 L436.8 487.8 L403.4 506.6" fill="none" stroke="#65c367" stroke-width="9.200" stroke-linecap="round" stroke-linejoin="round" stroke-opacity=".55"/>
<path d="M371.8 334.3 L436.8 487.8 L403.4 506.6" fill="none" stroke="#7cee7e" stroke-width="7.800" stroke-linecap="round" stroke-linejoin="round" stroke-opacity=".95"/>
<path d="M394.0 419.2 L446.5 532.4 L418.3 521.1" fill="none" stroke="#cd871f" stroke-width="9.200" stroke-linecap="round" stroke-linejoin="round" stroke-opacity=".55"/>
<path d="M394.0 419.2 L446.5 532.4 L418.3 521.1" fill="none" stroke="#fba526" stroke-width="7.800" stroke-linecap="round" stroke-linejoin="round" stroke-opacity=".95"/>
<path d="M323.8 352.3 L462.2 406.1 L509.8 422.2" fill="none" stroke="#97bf3b" stroke-width="9.200" stroke-linecap="round" stroke-linejoin="round" stroke-opacity=".55"/>
<path d="M323.8 352.3 L462.2 406.1 L509.8 422.2" fill="none" stroke="#b9e949" stroke-width="7.800" stroke-linecap="round" stroke-linejoin="round" stroke-opacity=".95"/>
<path d="M290.7 345.8 L357.6 467.6 L393.1 371.9" fill="none" stroke="#a2be33" stroke-width="9.200" stroke-linecap="round" stroke-linejoin="round" stroke-opacity=".55"/>
<path d="M290.7 345.8 L357.6 467.6 L393.1 371.9" fill="none" stroke="#c6e83f" stroke-width="7.800" stroke-linecap="round" stroke-linejoin="round" stroke-opacity=".95"/>
<path d="M456.6 269.4 L354.5 474.4 L347.6 401.3" fill="none" stroke="#cd9a1f" stroke-width="9.200" stroke-linecap="round" stroke-linejoin="round" stroke-opacity=".55"/>
<path d="M456.6 269.4 L354.5 474.4 L347.6 401.3" fill="none" stroke="#fbbd27" stroke-width="7.800" stroke-linecap="round" stroke-linejoin="round" stroke-opacity=".95"/>
<path d="M376.3 416.4 L378.7 536.9 L318.6 515.3" fill="none" stroke="#a9bc30" stroke-width="9.200" stroke-linecap="round" stroke-linejoin="round" stroke-opacity=".55"/>
<path d="M376.3 416.4 L378.7 536.9 L318.6 515.3" fill="none" stroke="#cfe63b" stroke-width="7.800" stroke-linecap="round" stroke-linejoin="round" stroke-opacity=".95"/>
<path d="M507.7 340.9 L316.6 414.2 L399.0 337.4" fill="none" stroke="#cdb620" stroke-width="9.200" stroke-linecap="round" stroke-linejoin="round" stroke-opacity=".55"/>
<path d="M507.7 340.9 L316.6 414.2 L399.0 337.4" fill="none" stroke="#fade28" stroke-width="7.800" stroke-linecap="round" stroke-linejoin="round" stroke-opacity=".95"/>
<path d="M382.5 369.7 L544.5 453.1 L520.0 477.3" fill="none" stroke="#97bf3b" stroke-width="9.200" stroke-linecap="round" stroke-linejoin="round" stroke-opacity=".55"/>
<path d="M382.5 369.7 L544.5 453.1 L520.0 477.3" fill="none" stroke="#b9e949" stroke-width="7.800" stroke-linecap="round" stroke-linejoin="round" stroke-opacity=".95"/>
<path d="M431.9 385.2 L247.2 412.6" fill="none" stroke="#cd761d" stroke-width="9.200" stroke-linecap="round" stroke-linejoin="round" stroke-opacity=".55"/>
<path d="M431.9 385.2 L247.2 412.6" fill="none" stroke="#fa9124" stroke-width="7.800" stroke-linecap="round" stroke-linejoin="round" stroke-opacity=".95"/>
<path d="M432.4 279.8 L461.2 489.7" fill="none" stroke="#7dc051" stroke-width="9.200" stroke-linecap="round" stroke-linejoin="round" stroke-opacity=".55"/>
<path d="M432.4 279.8 L461.2 489.7" fill="none" stroke="#99eb63" stroke-width="7.800" stroke-linecap="round" stroke-linejoin="round" stroke-opacity=".95"/>
<path d="M366.6 343.3 L399.2 442.6 L370.5 344.2" fill="none" stroke="#cd5f1b" stroke-width="9.200" stroke-linecap="round" stroke-linejoin="round" stroke-opacity=".55"/>
<path d="M366.6 343.3 L399.2 442.6 L370.5 344.2" fill="none" stroke="#fa7521" stroke-width="7.800" stroke-linecap="round" stroke-linejoin="round" stroke-opacity=".95"/>
<path d="M458.9 304.7 L424.5 466.2 L448.7 560.0" fill="none" stroke="#8cbf44" stroke-width="9.200" stroke-linecap="round" stroke-linejoin="round" stroke-opacity=".55"/>
<path d="M458.9 304.7 L424.5 466.2 L448.7 560.0" fill="none" stroke="#abea54" stroke-width="7.800" stroke-linecap="round" stroke-linejoin="round" stroke-opacity=".95"/>
<path d="M283.1 361.4 L291.7 467.2 L336.7 520.1" fill="none" stroke="#56c476" stroke-width="9.200" stroke-linecap="round" stroke-linejoin="round" stroke-opacity=".55"/>
<path d="M283.1 361.4 L291.7 467.2 L336.7 520.1" fill="none" stroke="#69f091" stroke-width="7.800" stroke-linecap="round" stroke-linejoin="round" stroke-opacity=".95"/>
<path d="M532.7 392.1 L436.0 449.8" fill="none" stroke="#cdaf20" stroke-width="9.200" stroke-linecap="round" stroke-linejoin="round" stroke-opacity=".55"/>
<path d="M532.7 392.1 L436.0 449.8" fill="none" stroke="#fad628" stroke-width="7.800" stroke-linecap="round" stroke-linejoin="round" stroke-opacity=".95"/>
<path d="M454.9 277.1 L332.4 457.3" fill="none" stroke="#cd871f" stroke-width="9.200" stroke-linecap="round" stroke-linejoin="round" stroke-opacity=".55"/>
<path d="M454.9 277.1 L332.4 457.3" fill="none" stroke="#fba526" stroke-width="7.800" stroke-linecap="round" stroke-linejoin="round" stroke-opacity=".95"/>
<path d="M413.2 373.6 L340.0 476.8" fill="none" stroke="#36c791" stroke-width="9.200" stroke-linecap="round" stroke-linejoin="round" stroke-opacity=".55"/>
<path d="M413.2 373.6 L340.0 476.8" fill="none" stroke="#42f3b1" stroke-width="7.800" stroke-linecap="round" stroke-linejoin="round" stroke-opacity=".95"/>
<path d="M368.2 278.6 L347.3 437.6" fill="none" stroke="#c5b724" stroke-width="9.200" stroke-linecap="round" stroke-linejoin="round" stroke-opacity=".55"/>
<path d="M368.2 278.6 L347.3 437.6" fill="none" stroke="#f1e02c" stroke-width="7.800" stroke-linecap="round" stroke-linejoin="round" stroke-opacity=".95"/>
<path d="M474.1 314.3 L306.4 431.3" fill="none" stroke="#8cbf44" stroke-width="9.200" stroke-linecap="round" stroke-linejoin="round" stroke-opacity=".55"/>
<path d="M474.1 314.3 L306.4 431.3" fill="none" stroke="#abea54" stroke-width="7.800" stroke-linecap="round" stroke-linejoin="round" stroke-opacity=".95"/>
<path d="M478.6 270.3 L326.9 441.2 L382.4 490.3" fill="none" stroke="#8cbf44" stroke-width="9.200" stroke-linecap="round" stroke-linejoin="round" stroke-opacity=".55"/>
<path d="M478.6 270.3 L326.9 441.2 L382.4 490.3" fill="none" stroke="#abea54" stroke-width="7.800" stroke-linecap="round" stroke-linejoin="round" stroke-opacity=".95"/>
<path d="M466.9 426.8 L327.2 446.7 L399.3 521.6" fill="none" stroke="#56c476" stroke-width="9.200" stroke-linecap="round" stroke-linejoin="round" stroke-opacity=".55"/>
<path d="M466.9 426.8 L327.2 446.7 L399.3 521.6" fill="none" stroke="#69f091" stroke-width="7.800" stroke-linecap="round" stroke-linejoin="round" stroke-opacity=".95"/>
<path d="M413.4 318.7 L280.9 357.6 L285.0 443.2" fill="none" stroke="#70c15c" stroke-width="9.200" stroke-linecap="round" stroke-linejoin="round" stroke-opacity=".55"/>
<path d="M413.4 318.7 L280.9 357.6 L285.0 443.2" fill="none" stroke="#89ec71" stroke-width="7.800" stroke-linecap="round" stroke-linejoin="round" stroke-opacity=".95"/>
<path d="M477.7 248.9 L370.0 332.9 L410.5 260.3" fill="none" stroke="#cdaf20" stroke-width="9.200" stroke-linecap="round" stroke-linejoin="round" stroke-opacity=".55"/>
<path d="M477.7 248.9 L370.0 332.9 L410.5 260.3" fill="none" stroke="#fad628" stroke-width="7.800" stroke-linecap="round" stroke-linejoin="round" stroke-opacity=".95"/>
<path d="M251.8 411.7 L423.8 426.7" fill="none" stroke="#56c476" stroke-width="9.200" stroke-linecap="round" stroke-linejoin="round" stroke-opacity=".55"/>
<path d="M251.8 411.7 L423.8 426.7" fill="none" stroke="#69f091" stroke-width="7.800" stroke-linecap="round" stroke-linejoin="round" stroke-opacity=".95"/>
<path d="M405.8 336.6 L339.8 459.0 L344.6 554.4" fill="none" stroke="#70c15c" stroke-width="9.200" stroke-linecap="round" stroke-linejoin="round" stroke-opacity=".55"/>
<path d="M405.8 336.6 L339.8 459.0 L344.6 554.4" fill="none" stroke="#89ec71" stroke-width="7.800" stroke-linecap="round" stroke-linejoin="round" stroke-opacity=".95"/>
<path d="M456.9 394.9 L339.8 399.8 L308.5 409.6" fill="none" stroke="#cdaf20" stroke-width="9.200" stroke-linecap="round" stroke-linejoin="round" stroke-opacity=".55"/>
<path d="M456.9 394.9 L339.8 399.8 L308.5 409.6" fill="none" stroke="#fad628" stroke-width="7.800" stroke-linecap="round" stroke-linejoin="round" stroke-opacity=".95"/>
<path d="M341.8 346.8 L531.9 383.7" fill="none" stroke="#43c686" stroke-width="9.200" stroke-linecap="round" stroke-linejoin="round" stroke-opacity=".55"/>
<path d="M341.8 346.8 L531.9 383.7" fill="none" stroke="#52f2a4" stroke-width="7.800" stroke-linecap="round" stroke-linejoin="round" stroke-opacity=".95"/>
<path d="M318.2 298.6 L372.1 510.3" fill="none" stroke="#cd5f1b" stroke-width="9.200" stroke-linecap="round" stroke-linejoin="round" stroke-opacity=".55"/>
<path d="M318.2 298.6 L372.1 510.3" fill="none" stroke="#fa7521" stroke-width="7.800" stroke-linecap="round" stroke-linejoin="round" stroke-opacity=".95"/>
<path d="M432.5 317.3 L249.4 394.6 L285.0 298.2" fill="none" stroke="#43c686" stroke-width="9.200" stroke-linecap="round" stroke-linejoin="round" stroke-opacity=".55"/>
<path d="M432.5 317.3 L249.4 394.6 L285.0 298.2" fill="none" stroke="#52f2a4" stroke-width="7.800" stroke-linecap="round" stroke-linejoin="round" stroke-opacity=".95"/>
<path d="M412.6 234.6 L397.5 391.4 L325.0 380.9" fill="none" stroke="#cd5f1b" stroke-width="9.200" stroke-linecap="round" stroke-linejoin="round" stroke-opacity=".55"/>
<path d="M412.6 234.6 L397.5 391.4 L325.0 380.9" fill="none" stroke="#fa7521" stroke-width="7.800" stroke-linecap="round" stroke-linejoin="round" stroke-opacity=".95"/>
<path d="M422.3 352.1 L263.6 501.2" fill="none" stroke="#43c686" stroke-width="9.200" stroke-linecap="round" stroke-linejoin="round" stroke-opacity=".55"/>
<path d="M422.3 352.1 L263.6 501.2" fill="none" stroke="#52f2a4" stroke-width="7.800" stroke-linecap="round" stroke-linejoin="round" stroke-opacity=".95"/>
<path d="M271.0 363.1 L375.3 438.6" fill="none" stroke="#b7ba2a" stroke-width="9.200" stroke-linecap="round" stroke-linejoin="round" stroke-opacity=".55"/>
<path d="M271.0 363.1 L375.3 438.6" fill="none" stroke="#e0e334" stroke-width="7.800" stroke-linecap="round" stroke-linejoin="round" stroke-opacity=".95"/>
<path d="M481.8 306.4 L357.2 478.8" fill="none" stroke="#c5b724" stroke-width="9.200" stroke-linecap="round" stroke-linejoin="round" stroke-opacity=".55"/>
<path d="M481.8 306.4 L357.2 478.8" fill="none" stroke="#f1e02c" stroke-width="7.800" stroke-linecap="round" stroke-linejoin="round" stroke-opacity=".95"/>
<path d="M469.5 412.3 L373.8 464.9 L404.3 527.4" fill="none" stroke="#cdaf20" stroke-width="9.200" stroke-linecap="round" stroke-linejoin="round" stroke-opacity=".55"/>
<path d="M469.5 412.3 L373.8 464.9 L404.3 527.4" fill="none" stroke="#fad628" stroke-width="7.800" stroke-linecap="round" stroke-linejoin="round" stroke-opacity=".95"/>
<path d="M461.1 413.6 L284.2 447.6 L285.0 532.3" fill="none" stroke="#cdb620" stroke-width="9.200" stroke-linecap="round" stroke-linejoin="round" stroke-opacity=".55"/>
<path d="M461.1 413.6 L284.2 447.6 L285.0 532.3" fill="none" stroke="#fade28" stroke-width="7.800" stroke-linecap="round" stroke-linejoin="round" stroke-opacity=".95"/>
<path d="M516.5 442.3 L310.1 448.9" fill="none" stroke="#97bf3b" stroke-width="9.200" stroke-linecap="round" stroke-linejoin="round" stroke-opacity=".55"/>
<path d="M516.5 442.3 L310.1 448.9" fill="none" stroke="#b9e949" stroke-width="7.800" stroke-linecap="round" stroke-linejoin="round" stroke-opacity=".95"/>
<path d="M405.2 360.7 L439.5 496.3 L418.7 500.2" fill="none" stroke="#a2be33" stroke-width="9.200" stroke-linecap="round" stroke-linejoin="round" stroke-opacity=".55"/>
<path d="M405.2 360.7 L439.5 496.3 L418.7 500.2" fill="none" stroke="#c6e83f" stroke-width="7.800" stroke-linecap="round" stroke-linejoin="round" stroke-opacity=".95"/>
<path d="M460.6 348.1 L456.8 447.0" fill="none" stroke="#cd9a1f" stroke-width="9.200" stroke-linecap="round" stroke-linejoin="round" stroke-opacity=".55"/>
<path d="M460.6 348.1 L456.8 447.0" fill="none" stroke="#fbbd27" stroke-width="7.800" stroke-linecap="round" stroke-linejoin="round" stroke-opacity=".95"/>
<path d="M350.2 372.4 L473.8 405.8" fill="none" stroke="#70c15c" stroke-width="9.200" stroke-linecap="round" stroke-linejoin="round" stroke-opacity=".55"/>
<path d="M350.2 372.4 L473.8 405.8" fill="none" stroke="#89ec71" stroke-width="7.800" stroke-linecap="round" stroke-linejoin="round" stroke-opacity=".95"/>
<path d="M510.8 347.7 L346.4 431.7" fill="none" stroke="#43c686" stroke-width="9.200" stroke-linecap="round" stroke-linejoin="round" stroke-opacity=".55"/>
<path d="M510.8 347.7 L346.4 431.7" fill="none" stroke="#52f2a4" stroke-width="7.800" stroke-linecap="round" stroke-linejoin="round" stroke-opacity=".95"/>
<path d="M423.8 321.5 L382.4 505.0" fill="none" stroke="#70c15c" stroke-width="9.200" stroke-linecap="round" stroke-linejoin="round" stroke-opacity=".55"/>
<path d="M423.8 321.5 L382.4 505.0" fill="none" stroke="#89ec71" stroke-width="7.800" stroke-linecap="round" stroke-linejoin="round" stroke-opacity=".95"/>
<path d="M468.7 386.4 L347.9 427.7 L305.5 344.4" fill="none" stroke="#cd5f1b" stroke-width="9.200" stroke-linecap="round" stroke-linejoin="round" stroke-opacity=".55"/>
<path d="M468.7 386.4 L347.9 427.7 L305.5 344.4" fill="none" stroke="#fa7521" stroke-width="7.800" stroke-linecap="round" stroke-linejoin="round" stroke-opacity=".95"/>
<path d="M378.4 315.9 L459.4 462.5 L389.1 388.0" fill="none" stroke="#cd761d" stroke-width="9.200" stroke-linecap="round" stroke-linejoin="round" stroke-opacity=".55"/>
<path d="M378.4 315.9 L459.4 462.5 L389.1 388.0" fill="none" stroke="#fa9124" stroke-width="7.800" stroke-linecap="round" stroke-linejoin="round" stroke-opacity=".95"/>
<path d="M266.8 305.5 L452.6 424.4 L411.3 491.2" fill="none" stroke="#a9bc30" stroke-width="9.200" stroke-linecap="round" stroke-linejoin="round" stroke-opacity=".55"/>
<path d="M266.8 305.5 L452.6 424.4 L411.3 491.2" fill="none" stroke="#cfe63b" stroke-width="7.800" stroke-linecap="round" stroke-linejoin="round" stroke-opacity=".95"/>
<path d="M241.1 395.2 L333.0 405.9" fill="none" stroke="#b7ba2a" stroke-width="9.200" stroke-linecap="round" stroke-linejoin="round" stroke-opacity=".55"/>
<path d="M241.1 395.2 L333.0 405.9" fill="none" stroke="#e0e334" stroke-width="7.800" stroke-linecap="round" stroke-linejoin="round" stroke-opacity=".95"/>
<path d="M460.3 350.9 L357.6 372.2 L358.8 413.5" fill="none" stroke="#b7ba2a" stroke-width="9.200" stroke-linecap="round" stroke-linejoin="round" stroke-opacity=".55"/>
<path d="M460.3 350.9 L357.6 372.2 L358.8 413.5" fill="none" stroke="#e0e334" stroke-width="7.800" stroke-linecap="round" stroke-linejoin="round" stroke-opacity=".95"/>
<path d="M328.5 252.5 L426.5 434.3 L359.8 339.8" fill="none" stroke="#a9bc30" stroke-width="9.200" stroke-linecap="round" stroke-linejoin="round" stroke-opacity=".55"/>
<path d="M328.5 252.5 L426.5 434.3 L359.8 339.8" fill="none" stroke="#cfe63b" stroke-width="7.800" stroke-linecap="round" stroke-linejoin="round" stroke-opacity=".95"/>
<path d="M362.6 319.3 L383.7 414.8" fill="none" stroke="#a2be33" stroke-width="9.200" stroke-linecap="round" stroke-linejoin="round" stroke-opacity=".55"/>
<path d="M362.6 319.3 L383.7 414.8" fill="none" stroke="#c6e83f" stroke-width="7.800" stroke-linecap="round" stroke-linejoin="round" stroke-opacity=".95"/>
<path d="M443.9 324.1 L386.8 502.1 L356.0 560.0" fill="none" stroke="#97bf3b" stroke-width="9.200" stroke-linecap="round" stroke-linejoin="round" stroke-opacity=".55"/>
<path d="M443.9 324.1 L386.8 502.1 L356.0 560.0" fill="none" stroke="#b9e949" stroke-width="7.800" stroke-linecap="round" stroke-linejoin="round" stroke-opacity=".95"/>
<path d="M298.0 366.1 L460.0 522.6 L460.4 456.8" fill="none" stroke="#43c686" stroke-width="9.200" stroke-linecap="round" stroke-linejoin="round" stroke-opacity=".55"/>
<path d="M298.0 366.1 L460.0 522.6 L460.4 456.8" fill="none" stroke="#52f2a4" stroke-width="7.800" stroke-linecap="round" stroke-linejoin="round" stroke-opacity=".95"/>
<path d="M439.8 348.9 L361.5 415.3" fill="none" stroke="#7dc051" stroke-width="9.200" stroke-linecap="round" stroke-linejoin="round" stroke-opacity=".55"/>
<path d="M439.8 348.9 L361.5 415.3" fill="none" stroke="#99eb63" stroke-width="7.800" stroke-linecap="round" stroke-linejoin="round" stroke-opacity=".95"/>
<path d="M331.3 459.7 L463.6 469.1" fill="none" stroke="#cdaf20" stroke-width="9.200" stroke-linecap="round" stroke-linejoin="round" stroke-opacity=".55"/>
<path d="M331.3 459.7 L463.6 469.1" fill="none" stroke="#fad628" stroke-width="7.800" stroke-linecap="round" stroke-linejoin="round" stroke-opacity=".95"/>
<path d="M464.6 290.5 L374.2 457.9 L414.5 489.4" fill="none" stroke="#cd761d" stroke-width="9.200" stroke-linecap="round" stroke-linejoin="round" stroke-opacity=".55"/>
<path d="M464.6 290.5 L374.2 457.9 L414.5 489.4" fill="none" stroke="#fa9124" stroke-width="7.800" stroke-linecap="round" stroke-linejoin="round" stroke-opacity=".95"/>
<path d="M432.9 351.4 L270.9 450.8" fill="none" stroke="#43c686" stroke-width="9.200" stroke-linecap="round" stroke-linejoin="round" stroke-opacity=".55"/>
<path d="M432.9 351.4 L270.9 450.8" fill="none" stroke="#52f2a4" stroke-width="7.800" stroke-linecap="round" stroke-linejoin="round" stroke-opacity=".95"/>
<path d="M245.9 368.0 L393.9 437.3" fill="none" stroke="#ce4c17" stroke-width="9.200" stroke-linecap="round" stroke-linejoin="round" stroke-opacity=".55"/>
<path d="M245.9 368.0 L393.9 437.3" fill="none" stroke="#fc5d1d" stroke-width="7.800" stroke-linecap="round" stroke-linejoin="round" stroke-opacity=".95"/>
<path d="M520.8 331.2 L368.1 443.6 L450.9 416.5" fill="none" stroke="#65c367" stroke-width="9.200" stroke-linecap="round" stroke-linejoin="round" stroke-opacity=".55"/>
<path d="M520.8 331.2 L368.1 443.6 L450.9 416.5" fill="none" stroke="#7cee7e" stroke-width="7.800" stroke-linecap="round" stroke-linejoin="round" stroke-opacity=".95"/>
<path d="M368.0 269.1 L335.5 444.0 L380.1 444.7" fill="none" stroke="#36c791" stroke-width="9.200" stroke-linecap="round" stroke-linejoin="round" stroke-opacity=".55"/>
<path d="M368.0 269.1 L335.5 444.0 L380.1 444.7" fill="none" stroke="#42f3b1" stroke-width="7.800" stroke-linecap="round" stroke-linejoin="round" stroke-opacity=".95"/>
<path d="M312.4 330.7 L469.3 377.3" fill="none" stroke="#a9bc30" stroke-width="9.200" stroke-linecap="round" stroke-linejoin="round" stroke-opacity=".55"/>
<path d="M312.4 330.7 L469.3 377.3" fill="none" stroke="#cfe63b" stroke-width="7.800" stroke-linecap="round" stroke-linejoin="round" stroke-opacity=".95"/>
<path d="M326.2 403.8 L471.1 535.6 L520.0 488.8" fill="none" stroke="#cd761d" stroke-width="9.200" stroke-linecap="round" stroke-linejoin="round" stroke-opacity=".55"/>
<path d="M326.2 403.8 L471.1 535.6 L520.0 488.8" fill="none" stroke="#fa9124" stroke-width="7.800" stroke-linecap="round" stroke-linejoin="round" stroke-opacity=".95"/>
<path d="M443.3 332.9 L378.6 500.9 L390.8 393.6" fill="none" stroke="#cd761d" stroke-width="9.200" stroke-linecap="round" stroke-linejoin="round" stroke-opacity=".55"/>
<path d="M443.3 332.9 L378.6 500.9 L390.8 393.6" fill="none" stroke="#fa9124" stroke-width="7.800" stroke-linecap="round" stroke-linejoin="round" stroke-opacity=".95"/>
<path d="M408.5 310.5 L418.6 536.4 L412.5 560.0" fill="none" stroke="#36c791" stroke-width="9.200" stroke-linecap="round" stroke-linejoin="round" stroke-opacity=".55"/>
<path d="M408.5 310.5 L418.6 536.4 L412.5 560.0" fill="none" stroke="#42f3b1" stroke-width="7.800" stroke-linecap="round" stroke-linejoin="round" stroke-opacity=".95"/>
<path d="M306.6 335.2 L490.5 468.2 L481.4 417.3" fill="none" stroke="#c5b724" stroke-width="9.200" stroke-linecap="round" stroke-linejoin="round" stroke-opacity=".55"/>
<path d="M306.6 335.2 L490.5 468.2 L481.4 417.3" fill="none" stroke="#f1e02c" stroke-width="7.800" stroke-linecap="round" stroke-linejoin="round" stroke-opacity=".95"/>
<path d="M513.1 385.3 L300.4 442.4" fill="none" stroke="#a9bc30" stroke-width="9.200" stroke-linecap="round" stroke-linejoin="round" stroke-opacity=".55"/>
<path d="M513.1 385.3 L300.4 442.4" fill="none" stroke="#cfe63b" stroke-width="7.800" stroke-linecap="round" stroke-linejoin="round" stroke-opacity=".95"/>
<path d="M465.0 348.5 L357.7 364.5" fill="none" stroke="#8cbf44" stroke-width="9.200" stroke-linecap="round" stroke-linejoin="round" stroke-opacity=".55"/>
<path d="M465.0 348.5 L357.7 364.5" fill="none" stroke="#abea54" stroke-width="7.800" stroke-linecap="round" stroke-linejoin="round" stroke-opacity=".95"/>
<path d="M302.9 334.2 L464.1 477.5 L428.4 398.5" fill="none" stroke="#8cbf44" stroke-width="9.200" stroke-linecap="round" stroke-linejoin="round" stroke-opacity=".55"/>
<path d="M302.9 334.2 L464.1 477.5 L428.4 398.5" fill="none" stroke="#abea54" stroke-width="7.800" stroke-linecap="round" stroke-linejoin="round" stroke-opacity=".95"/>
<path d="M355.3 390.3 L395.8 489.2 L341.1 381.8" fill="none" stroke="#a2be33" stroke-width="9.200" stroke-linecap="round" stroke-linejoin="round" stroke-opacity=".55"/>
<path d="M355.3 390.3 L395.8 489.2 L341.1 381.8" fill="none" stroke="#c6e83f" stroke-width="7.800" stroke-linecap="round" stroke-linejoin="round" stroke-opacity=".95"/>
<path d="M298.1 427.5 L367.5 498.3 L431.3 450.0" fill="none" stroke="#cd761d" stroke-width="9.200" stroke-linecap="round" stroke-linejoin="round" stroke-opacity=".55"/>
<path d="M298.1 427.5 L367.5 498.3 L431.3 450.0" fill="none" stroke="#fa9124" stroke-width="7.800" stroke-linecap="round" stroke-linejoin="round" stroke-opacity=".95"/>
<path d="M474.9 359.3 L362.0 423.8 L339.2 524.2" fill="none" stroke="#cd5f1b" stroke-width="9.200" stroke-linecap="round" stroke-linejoin="round" stroke-opacity=".55"/>
<path d="M474.9 359.3 L362.0 423.8 L339.2 524.2" fill="none" stroke="#fa7521" stroke-width="7.800" stroke-linecap="round" stroke-linejoin="round" stroke-opacity=".95"/>
<path d="M543.3 300.0 L395.2 399.3" fill="none" stroke="#cd871f" stroke-width="9.200" stroke-linecap="round" stroke-linejoin="round" stroke-opacity=".55"/>
<path d="M543.3 300.0 L395.2 399.3" fill="none" stroke="#fba526" stroke-width="7.800" stroke-linecap="round" stroke-linejoin="round" stroke-opacity=".95"/>
<path d="M236.4 413.0 L426.6 442.8" fill="none" stroke="#a2be33" stroke-width="9.200" stroke-linecap="round" stroke-linejoin="round" stroke-opacity=".55"/>
<path d="M236.4 413.0 L426.6 442.8" fill="none" stroke="#c6e83f" stroke-width="7.800" stroke-linecap="round" stroke-linejoin="round" stroke-opacity=".95"/>
<path d="M365.0 287.8 L374.8 505.2 L417.8 538.8" fill="none" stroke="#7dc051" stroke-width="9.200" stroke-linecap="round" stroke-linejoin="round" stroke-opacity=".55"/>
<path d="M365.0 287.8 L374.8 505.2 L417.8 538.8" fill="none" stroke="#99eb63" stroke-width="7.800" stroke-linecap="round" stroke-linejoin="round" stroke-opacity=".95"/>
<path d="M387.5 330.8 L325.3 447.4 L398.4 446.8" fill="none" stroke="#b7ba2a" stroke-width="9.200" stroke-linecap="round" stroke-linejoin="round" stroke-opacity=".55"/>
<path d="M387.5 330.8 L325.3 447.4 L398.4 446.8" fill="none" stroke="#e0e334" stroke-width="7.800" stroke-linecap="round" stroke-linejoin="round" stroke-opacity=".95"/>
<path d="M485.0 584.6 L412.0 486.1 L370.8 480.4" fill="none" stroke="#65c367" stroke-width="9.200" stroke-linecap="round" stroke-linejoin="round" stroke-opacity=".55"/>
<path d="M485.0 584.6 L412.0 486.1 L370.8 480.4" fill="none" stroke="#7cee7e" stroke-width="7.800" stroke-linecap="round" stroke-linejoin="round" stroke-opacity=".95"/>
<path d="M391.1 512.4 L469.5 493.2" fill="none" stroke="#cdb620" stroke-width="9.200" stroke-linecap="round" stroke-linejoin="round" stroke-opacity=".55"/>
<path d="M391.1 512.4 L469.5 493.2" fill="none" stroke="#fade28" stroke-width="7.800" stroke-linecap="round" stroke-linejoin="round" stroke-opacity=".95"/>
<path d="M401.3 555.8 L373.6 501.1 L460.3 527.3" fill="none" stroke="#65c367" stroke-width="9.200" stroke-linecap="round" stroke-linejoin="round" stroke-opacity=".55"/>
<path d="M401.3 555.8 L373.6 501.1 L460.3 527.3" fill="none" stroke="#7cee7e" stroke-width="7.800" stroke-linecap="round" stroke-linejoin="round" stroke-opacity=".95"/>
<path d="M449.9 530.9 L466.4 567.6" fill="none" stroke="#a9bc30" stroke-width="9.200" stroke-linecap="round" stroke-linejoin="round" stroke-opacity=".55"/>
<path d="M449.9 530.9 L466.4 567.6" fill="none" stroke="#cfe63b" stroke-width="7.800" stroke-linecap="round" stroke-linejoin="round" stroke-opacity=".95"/>
<path d="M483.5 514.2 L443.3 519.7 L389.9 563.6" fill="none" stroke="#cdb620" stroke-width="9.200" stroke-linecap="round" stroke-linejoin="round" stroke-opacity=".55"/>
<path d="M483.5 514.2 L443.3 519.7 L389.9 563.6" fill="none" stroke="#fade28" stroke-width="7.800" stroke-linecap="round" stroke-linejoin="round" stroke-opacity=".95"/>
<path d="M345.2 551.6 L483.3 524.4" fill="none" stroke="#cd761d" stroke-width="9.200" stroke-linecap="round" stroke-linejoin="round" stroke-opacity=".55"/>
<path d="M345.2 551.6 L483.3 524.4" fill="none" stroke="#fa9124" stroke-width="7.800" stroke-linecap="round" stroke-linejoin="round" stroke-opacity=".95"/>
<path d="M351.7 577.0 L488.5 530.7" fill="none" stroke="#cd761d" stroke-width="9.200" stroke-linecap="round" stroke-linejoin="round" stroke-opacity=".55"/>
<path d="M351.7 577.0 L488.5 530.7" fill="none" stroke="#fa9124" stroke-width="7.800" stroke-linecap="round" stroke-linejoin="round" stroke-opacity=".95"/>
<path d="M379.8 482.5 L364.7 530.1 L449.1 578.3" fill="none" stroke="#cd761d" stroke-width="9.200" stroke-linecap="round" stroke-linejoin="round" stroke-opacity=".55"/>
<path d="M379.8 482.5 L364.7 530.1 L449.1 578.3" fill="none" stroke="#fa9124" stroke-width="7.800" stroke-linecap="round" stroke-linejoin="round" stroke-opacity=".95"/>
<path d="M428.2 474.5 L465.2 496.7" fill="none" stroke="#cdb620" stroke-width="9.200" stroke-linecap="round" stroke-linejoin="round" stroke-opacity=".55"/>
<path d="M428.2 474.5 L465.2 496.7" fill="none" stroke="#fade28" stroke-width="7.800" stroke-linecap="round" stroke-linejoin="round" stroke-opacity=".95"/>
<path d="M494.0 542.0 L424.5 520.3 L462.2 481.4" fill="none" stroke="#72c15a" stroke-width="9.200" stroke-linecap="round" stroke-linejoin="round" stroke-opacity=".55"/>
<path d="M494.0 542.0 L424.5 520.3 L462.2 481.4" fill="none" stroke="#8cec6e" stroke-width="7.800" stroke-linecap="round" stroke-linejoin="round" stroke-opacity=".95"/>
<path d="M402.1 495.7 L436.2 471.2" fill="none" stroke="#72c15a" stroke-width="9.200" stroke-linecap="round" stroke-linejoin="round" stroke-opacity=".55"/>
<path d="M402.1 495.7 L436.2 471.2" fill="none" stroke="#8cec6e" stroke-width="7.800" stroke-linecap="round" stroke-linejoin="round" stroke-opacity=".95"/>
<path d="M384.6 506.4 L474.3 497.9 L424.2 532.9" fill="none" stroke="#cdb620" stroke-width="9.200" stroke-linecap="round" stroke-linejoin="round" stroke-opacity=".55"/>
<path d="M384.6 506.4 L474.3 497.9 L424.2 532.9" fill="none" stroke="#fade28" stroke-width="7.800" stroke-linecap="round" stroke-linejoin="round" stroke-opacity=".95"/>
<path d="M452.7 505.4 L343.5 527.3 L447.9 518.3" fill="none" stroke="#72c15a" stroke-width="9.200" stroke-linecap="round" stroke-linejoin="round" stroke-opacity=".55"/>
<path d="M452.7 505.4 L343.5 527.3 L447.9 518.3" fill="none" stroke="#8cec6e" stroke-width="7.800" stroke-linecap="round" stroke-linejoin="round" stroke-opacity=".95"/>
<path d="M446.8 576.4 L376.3 473.9" fill="none" stroke="#65c367" stroke-width="9.200" stroke-linecap="round" stroke-linejoin="round" stroke-opacity=".55"/>
<path d="M446.8 576.4 L376.3 473.9" fill="none" stroke="#7cee7e" stroke-width="7.800" stroke-linecap="round" stroke-linejoin="round" stroke-opacity=".95"/>
<path d="M398.0 515.6 L341.1 503.6 L475.2 477.8" fill="none" stroke="#cd761d" stroke-width="9.200" stroke-linecap="round" stroke-linejoin="round" stroke-opacity=".55"/>
<path d="M398.0 515.6 L341.1 503.6 L475.2 477.8" fill="none" stroke="#fa9124" stroke-width="7.800" stroke-linecap="round" stroke-linejoin="round" stroke-opacity=".95"/>
<path d="M389.9 564.3 L376.9 495.5" fill="none" stroke="#72c15a" stroke-width="9.200" stroke-linecap="round" stroke-linejoin="round" stroke-opacity=".55"/>
<path d="M389.9 564.3 L376.9 495.5" fill="none" stroke="#8cec6e" stroke-width="7.800" stroke-linecap="round" stroke-linejoin="round" stroke-opacity=".95"/>
<path d="M359.3 144.2 L379.5 167.7 L370.0 176.0 L384.0 184.5 L368.0 213.7 L350.4 263.0 L334.7 314.5" fill="none" stroke="#a9bc30" stroke-width="9.200" stroke-linecap="round" stroke-linejoin="round" stroke-opacity=".55"/>
<path d="M359.3 144.2 L379.5 167.7 L370.0 176.0 L384.0 184.5 L368.0 213.7 L350.4 263.0 L334.7 314.5" fill="none" stroke="#cfe63b" stroke-width="7.800" stroke-linecap="round" stroke-linejoin="round" stroke-opacity=".95"/>
<path d="M354.8 222.6 L316.7 249.5 L296.6 285.4 L256.0 370.6 L236.0 397.5 L189.0 521.0" fill="none" stroke="#a2be33" stroke-width="9.200" stroke-linecap="round" stroke-linejoin="round" stroke-opacity=".55"/>
<path d="M354.8 222.6 L316.7 249.5 L296.6 285.4 L256.0 370.6 L236.0 397.5 L189.0 521.0" fill="none" stroke="#c6e83f" stroke-width="7.800" stroke-linecap="round" stroke-linejoin="round" stroke-opacity=".95"/>
<path d="M189.0 521.0 L256.0 380.0 L301.0 283.0" fill="none" stroke="#a2be33" stroke-width="9.200" stroke-linecap="round" stroke-linejoin="round" stroke-opacity=".55"/>
<path d="M189.0 521.0 L256.0 380.0 L301.0 283.0" fill="none" stroke="#c6e83f" stroke-width="7.800" stroke-linecap="round" stroke-linejoin="round" stroke-opacity=".95"/>
<path d="M200.0 525.4 L300.0 470.0 L516.0 400.0" fill="none" stroke="#9abe39" stroke-width="9.200" stroke-linecap="round" stroke-linejoin="round" stroke-opacity=".55"/>
<path d="M200.0 525.4 L300.0 470.0 L516.0 400.0" fill="none" stroke="#bde846" stroke-width="7.800" stroke-linecap="round" stroke-linejoin="round" stroke-opacity=".95"/>
<path d="M189.0 521.0 L310.0 430.0 L420.0 380.0" fill="none" stroke="#93bf3f" stroke-width="9.200" stroke-linecap="round" stroke-linejoin="round" stroke-opacity=".55"/>
<path d="M189.0 521.0 L310.0 430.0 L420.0 380.0" fill="none" stroke="#b4e94d" stroke-width="7.800" stroke-linecap="round" stroke-linejoin="round" stroke-opacity=".95"/>
<path d="M204.7 381.8 L337.0 404.0 L450.0 430.0" fill="none" stroke="#84bf4b" stroke-width="9.200" stroke-linecap="round" stroke-linejoin="round" stroke-opacity=".55"/>
<path d="M204.7 381.8 L337.0 404.0 L450.0 430.0" fill="none" stroke="#a2ea5c" stroke-width="7.800" stroke-linecap="round" stroke-linejoin="round" stroke-opacity=".95"/>
<path d="M237.0 435.0 L301.0 455.0 L341.4 464.9" fill="none" stroke="#39c78e" stroke-width="9.200" stroke-linecap="round" stroke-linejoin="round" stroke-opacity=".55"/>
<path d="M237.0 435.0 L301.0 455.0 L341.4 464.9" fill="none" stroke="#46f3ae" stroke-width="7.800" stroke-linecap="round" stroke-linejoin="round" stroke-opacity=".95"/>
<path d="M229.0 487.0 L300.0 420.0 L330.0 380.0" fill="none" stroke="#39c78e" stroke-width="9.200" stroke-linecap="round" stroke-linejoin="round" stroke-opacity=".55"/>
<path d="M229.0 487.0 L300.0 420.0 L330.0 380.0" fill="none" stroke="#46f3ae" stroke-width="7.800" stroke-linecap="round" stroke-linejoin="round" stroke-opacity=".95"/>
<path d="M220.0 480.6 L300.0 440.0 L385.0 400.0" fill="none" stroke="#cdb620" stroke-width="9.200" stroke-linecap="round" stroke-linejoin="round" stroke-opacity=".55"/>
<path d="M220.0 480.6 L300.0 440.0 L385.0 400.0" fill="none" stroke="#fade28" stroke-width="7.800" stroke-linecap="round" stroke-linejoin="round" stroke-opacity=".95"/>
<path d="M258.5 518.7 L330.0 470.0 L404.0 420.0" fill="none" stroke="#cdb620" stroke-width="9.200" stroke-linecap="round" stroke-linejoin="round" stroke-opacity=".55"/>
<path d="M258.5 518.7 L330.0 470.0 L404.0 420.0" fill="none" stroke="#fade28" stroke-width="7.800" stroke-linecap="round" stroke-linejoin="round" stroke-opacity=".95"/>
<path d="M428.8 272.0 L337.0 200.0 L454.6 183.4 L440.0 240.0 L428.0 300.0" fill="none" stroke="#cd4e18" stroke-width="9.200" stroke-linecap="round" stroke-linejoin="round" stroke-opacity=".55"/>
<path d="M428.8 272.0 L337.0 200.0 L454.6 183.4 L440.0 240.0 L428.0 300.0" fill="none" stroke="#fb601e" stroke-width="7.800" stroke-linecap="round" stroke-linejoin="round" stroke-opacity=".95"/>
<path d="M413.0 198.0 L392.0 250.0 L375.0 290.0" fill="none" stroke="#cd761d" stroke-width="9.200" stroke-linecap="round" stroke-linejoin="round" stroke-opacity=".55"/>
<path d="M413.0 198.0 L392.0 250.0 L375.0 290.0" fill="none" stroke="#fa9124" stroke-width="7.800" stroke-linecap="round" stroke-linejoin="round" stroke-opacity=".95"/>
<path d="M413.0 198.0 L424.0 260.0 L433.0 307.8" fill="none" stroke="#cd761d" stroke-width="9.200" stroke-linecap="round" stroke-linejoin="round" stroke-opacity=".55"/>
<path d="M413.0 198.0 L424.0 260.0 L433.0 307.8" fill="none" stroke="#fa9124" stroke-width="7.800" stroke-linecap="round" stroke-linejoin="round" stroke-opacity=".95"/>
<path d="M452.4 207.0 L440.0 270.0 L433.0 309.0" fill="none" stroke="#cd7c1d" stroke-width="9.200" stroke-linecap="round" stroke-linejoin="round" stroke-opacity=".55"/>
<path d="M452.4 207.0 L440.0 270.0 L433.0 309.0" fill="none" stroke="#fb9824" stroke-width="7.800" stroke-linecap="round" stroke-linejoin="round" stroke-opacity=".95"/>
<path d="M452.4 207.0 L425.0 250.0 L404.0 281.0" fill="none" stroke="#cd7c1d" stroke-width="9.200" stroke-linecap="round" stroke-linejoin="round" stroke-opacity=".55"/>
<path d="M452.4 207.0 L425.0 250.0 L404.0 281.0" fill="none" stroke="#fb9824" stroke-width="7.800" stroke-linecap="round" stroke-linejoin="round" stroke-opacity=".95"/>
<path d="M436.7 198.0 L426.6 231.6 L420.0 290.0" fill="none" stroke="#32c893" stroke-width="9.200" stroke-linecap="round" stroke-linejoin="round" stroke-opacity=".55"/>
<path d="M436.7 198.0 L426.6 231.6 L420.0 290.0" fill="none" stroke="#3ef4b4" stroke-width="7.800" stroke-linecap="round" stroke-linejoin="round" stroke-opacity=".95"/>
<path d="M413.0 211.4 L411.0 281.0" fill="none" stroke="#49c581" stroke-width="9.200" stroke-linecap="round" stroke-linejoin="round" stroke-opacity=".55"/>
<path d="M413.0 211.4 L411.0 281.0" fill="none" stroke="#5af19e" stroke-width="7.800" stroke-linecap="round" stroke-linejoin="round" stroke-opacity=".95"/>
<path d="M505.0 184.5 L464.7 281.0 L450.0 340.0" fill="none" stroke="#60c36c" stroke-width="9.200" stroke-linecap="round" stroke-linejoin="round" stroke-opacity=".55"/>
<path d="M505.0 184.5 L464.7 281.0 L450.0 340.0" fill="none" stroke="#76ee84" stroke-width="7.800" stroke-linecap="round" stroke-linejoin="round" stroke-opacity=".95"/>
<path d="M381.7 337.0 L362.7 258.5 L534.0 267.5 L455.7 303.0" fill="none" stroke="#cdaf20" stroke-width="9.200" stroke-linecap="round" stroke-linejoin="round" stroke-opacity=".55"/>
<path d="M381.7 337.0 L362.7 258.5 L534.0 267.5 L455.7 303.0" fill="none" stroke="#fad628" stroke-width="7.800" stroke-linecap="round" stroke-linejoin="round" stroke-opacity=".95"/>
<path d="M365.0 262.0 L420.0 262.0 L520.0 266.0" fill="none" stroke="#cda81f" stroke-width="9.200" stroke-linecap="round" stroke-linejoin="round" stroke-opacity=".55"/>
<path d="M365.0 262.0 L420.0 262.0 L520.0 266.0" fill="none" stroke="#facd27" stroke-width="7.800" stroke-linecap="round" stroke-linejoin="round" stroke-opacity=".95"/>
<path d="M530.0 268.0 L470.0 330.0 L430.0 390.0" fill="none" stroke="#cdb620" stroke-width="9.200" stroke-linecap="round" stroke-linejoin="round" stroke-opacity=".55"/>
<path d="M530.0 268.0 L470.0 330.0 L430.0 390.0" fill="none" stroke="#fade28" stroke-width="7.800" stroke-linecap="round" stroke-linejoin="round" stroke-opacity=".95"/>
<path d="M456.0 307.0 L622.0 255.5 L712.6 232.3 L600.0 295.0 L494.6 353.0" fill="none" stroke="#cd871f" stroke-width="9.200" stroke-linecap="round" stroke-linejoin="round" stroke-opacity=".55"/>
<path d="M456.0 307.0 L622.0 255.5 L712.6 232.3 L600.0 295.0 L494.6 353.0" fill="none" stroke="#fba526" stroke-width="7.800" stroke-linecap="round" stroke-linejoin="round" stroke-opacity=".95"/>
<path d="M540.0 286.0 L456.0 302.7 L420.0 330.0" fill="none" stroke="#cd811e" stroke-width="9.200" stroke-linecap="round" stroke-linejoin="round" stroke-opacity=".55"/>
<path d="M540.0 286.0 L456.0 302.7 L420.0 330.0" fill="none" stroke="#fb9e25" stroke-width="7.800" stroke-linecap="round" stroke-linejoin="round" stroke-opacity=".95"/>
<path d="M319.0 278.7 L453.5 321.3 L363.8 379.5 L319.0 278.7 L323.5 359.4" fill="none" stroke="#a9bc30" stroke-width="9.200" stroke-linecap="round" stroke-linejoin="round" stroke-opacity=".55"/>
<path d="M319.0 278.7 L453.5 321.3 L363.8 379.5 L319.0 278.7 L323.5 359.4" fill="none" stroke="#cfe63b" stroke-width="7.800" stroke-linecap="round" stroke-linejoin="round" stroke-opacity=".95"/>
<path d="M295.4 281.0 L287.6 346.0 L300.0 370.0" fill="none" stroke="#a2be33" stroke-width="9.200" stroke-linecap="round" stroke-linejoin="round" stroke-opacity=".55"/>
<path d="M295.4 281.0 L287.6 346.0 L300.0 370.0" fill="none" stroke="#c6e83f" stroke-width="7.800" stroke-linecap="round" stroke-linejoin="round" stroke-opacity=".95"/>
<path d="M295.4 281.0 L323.5 357.0" fill="none" stroke="#a2be33" stroke-width="9.200" stroke-linecap="round" stroke-linejoin="round" stroke-opacity=".55"/>
<path d="M295.4 281.0 L323.5 357.0" fill="none" stroke="#c6e83f" stroke-width="7.800" stroke-linecap="round" stroke-linejoin="round" stroke-opacity=".95"/>
<path d="M290.0 337.0 L285.4 278.7 L337.0 330.0 L370.0 350.0" fill="none" stroke="#ce4817" stroke-width="9.200" stroke-linecap="round" stroke-linejoin="round" stroke-opacity=".55"/>
<path d="M290.0 337.0 L285.4 278.7 L337.0 330.0 L370.0 350.0" fill="none" stroke="#fc591d" stroke-width="7.800" stroke-linecap="round" stroke-linejoin="round" stroke-opacity=".95"/>
<path d="M345.9 307.8 L352.0 340.0 L362.0 318.0 L375.0 345.0" fill="none" stroke="#cd711c" stroke-width="9.200" stroke-linecap="round" stroke-linejoin="round" stroke-opacity=".55"/>
<path d="M345.9 307.8 L352.0 340.0 L362.0 318.0 L375.0 345.0" fill="none" stroke="#fa8a23" stroke-width="7.800" stroke-linecap="round" stroke-linejoin="round" stroke-opacity=".95"/>
<path d="M296.6 294.4 L298.8 402.0 L300.0 440.0" fill="none" stroke="#cd9a1f" stroke-width="9.200" stroke-linecap="round" stroke-linejoin="round" stroke-opacity=".55"/>
<path d="M296.6 294.4 L298.8 402.0 L300.0 440.0" fill="none" stroke="#fbbd27" stroke-width="7.800" stroke-linecap="round" stroke-linejoin="round" stroke-opacity=".95"/>
<path d="M285.4 334.7 L220.3 363.9 L236.0 399.7 L296.6 363.9 L330.0 352.0" fill="none" stroke="#cd651b" stroke-width="9.200" stroke-linecap="round" stroke-linejoin="round" stroke-opacity=".55"/>
<path d="M285.4 334.7 L220.3 363.9 L236.0 399.7 L296.6 363.9 L330.0 352.0" fill="none" stroke="#fa7c22" stroke-width="7.800" stroke-linecap="round" stroke-linejoin="round" stroke-opacity=".95"/>
<path d="M395.0 491.8 L240.5 528.8 L307.8 544.5 L278.6 496.3 L337.0 471.6 L380.0 455.0" fill="none" stroke="#cd5f1b" stroke-width="9.200" stroke-linecap="round" stroke-linejoin="round" stroke-opacity=".55"/>
<path d="M395.0 491.8 L240.5 528.8 L307.8 544.5 L278.6 496.3 L337.0 471.6 L380.0 455.0" fill="none" stroke="#fa7521" stroke-width="7.800" stroke-linecap="round" stroke-linejoin="round" stroke-opacity=".95"/>
<path d="M330.0 540.0 L345.0 500.0 L420.0 470.0" fill="none" stroke="#cd5a1a" stroke-width="9.200" stroke-linecap="round" stroke-linejoin="round" stroke-opacity=".55"/>
<path d="M330.0 540.0 L345.0 500.0 L420.0 470.0" fill="none" stroke="#fb6e20" stroke-width="7.800" stroke-linecap="round" stroke-linejoin="round" stroke-opacity=".95"/>
<path d="M304.4 579.2 L390.0 540.0" fill="none" stroke="#cd8d1f" stroke-width="9.200" stroke-linecap="round" stroke-linejoin="round" stroke-opacity=".55"/>
<path d="M304.4 579.2 L390.0 540.0" fill="none" stroke="#fbac26" stroke-width="7.800" stroke-linecap="round" stroke-linejoin="round" stroke-opacity=".95"/>
<path d="M390.0 540.0 L471.4 507.5" fill="none" stroke="#cdac20" stroke-width="9.200" stroke-linecap="round" stroke-linejoin="round" stroke-opacity=".55"/>
<path d="M390.0 540.0 L471.4 507.5" fill="none" stroke="#fad228" stroke-width="7.800" stroke-linecap="round" stroke-linejoin="round" stroke-opacity=".95"/>
<path d="M377.3 521.0 L310.0 628.5 L498.3 552.3 L440.0 520.0" fill="none" stroke="#9fbe36" stroke-width="9.200" stroke-linecap="round" stroke-linejoin="round" stroke-opacity=".55"/>
<path d="M377.3 521.0 L310.0 628.5 L498.3 552.3 L440.0 520.0" fill="none" stroke="#c2e842" stroke-width="7.800" stroke-linecap="round" stroke-linejoin="round" stroke-opacity=".95"/>
<path d="M402.0 583.7 L408.7 503.0" fill="none" stroke="#93bf3f" stroke-width="9.200" stroke-linecap="round" stroke-linejoin="round" stroke-opacity=".55"/>
<path d="M402.0 583.7 L408.7 503.0" fill="none" stroke="#b4e94d" stroke-width="7.800" stroke-linecap="round" stroke-linejoin="round" stroke-opacity=".95"/>
<path d="M390.7 588.0 L386.0 535.0 L395.0 500.0" fill="none" stroke="#9abe39" stroke-width="9.200" stroke-linecap="round" stroke-linejoin="round" stroke-opacity=".55"/>
<path d="M390.7 588.0 L386.0 535.0 L395.0 500.0" fill="none" stroke="#bde846" stroke-width="7.800" stroke-linecap="round" stroke-linejoin="round" stroke-opacity=".95"/>
<path d="M348.0 608.3 L404.0 494.0" fill="none" stroke="#84bf4b" stroke-width="9.200" stroke-linecap="round" stroke-linejoin="round" stroke-opacity=".55"/>
<path d="M348.0 608.3 L404.0 494.0" fill="none" stroke="#a2ea5c" stroke-width="7.800" stroke-linecap="round" stroke-linejoin="round" stroke-opacity=".95"/>
<path d="M359.3 617.3 L491.6 664.0" fill="none" stroke="#7dc051" stroke-width="9.200" stroke-linecap="round" stroke-linejoin="round" stroke-opacity=".55"/>
<path d="M359.3 617.3 L491.6 664.0" fill="none" stroke="#99eb63" stroke-width="7.800" stroke-linecap="round" stroke-linejoin="round" stroke-opacity=".95"/>
<path d="M348.0 608.3 L359.3 617.3" fill="none" stroke="#7dc051" stroke-width="9.200" stroke-linecap="round" stroke-linejoin="round" stroke-opacity=".55"/>
<path d="M348.0 608.3 L359.3 617.3" fill="none" stroke="#99eb63" stroke-width="7.800" stroke-linecap="round" stroke-linejoin="round" stroke-opacity=".95"/>
<path d="M497.2 664.0 L497.2 556.8 L496.0 503.0 L518.5 462.6 L478.0 426.8" fill="none" stroke="#7dc051" stroke-width="9.200" stroke-linecap="round" stroke-linejoin="round" stroke-opacity=".55"/>
<path d="M497.2 664.0 L497.2 556.8 L496.0 503.0 L518.5 462.6 L478.0 426.8" fill="none" stroke="#99eb63" stroke-width="7.800" stroke-linecap="round" stroke-linejoin="round" stroke-opacity=".95"/>
<path d="M516.2 550.0 L404.0 494.0 L380.0 470.0" fill="none" stroke="#6ac262" stroke-width="9.200" stroke-linecap="round" stroke-linejoin="round" stroke-opacity=".55"/>
<path d="M516.2 550.0 L404.0 494.0 L380.0 470.0" fill="none" stroke="#82ed78" stroke-width="7.800" stroke-linecap="round" stroke-linejoin="round" stroke-opacity=".95"/>
<path d="M473.6 509.7 L444.0 430.0" fill="none" stroke="#6ac262" stroke-width="9.200" stroke-linecap="round" stroke-linejoin="round" stroke-opacity=".55"/>
<path d="M473.6 509.7 L444.0 430.0" fill="none" stroke="#82ed78" stroke-width="7.800" stroke-linecap="round" stroke-linejoin="round" stroke-opacity=".95"/>
<path d="M444.5 590.4 L442.0 500.0" fill="none" stroke="#93bf3f" stroke-width="9.200" stroke-linecap="round" stroke-linejoin="round" stroke-opacity=".55"/>
<path d="M444.5 590.4 L442.0 500.0" fill="none" stroke="#b4e94d" stroke-width="7.800" stroke-linecap="round" stroke-linejoin="round" stroke-opacity=".95"/>
<path d="M455.7 561.3 L464.7 503.0" fill="none" stroke="#b7ba2a" stroke-width="9.200" stroke-linecap="round" stroke-linejoin="round" stroke-opacity=".55"/>
<path d="M455.7 561.3 L464.7 503.0" fill="none" stroke="#e0e334" stroke-width="7.800" stroke-linecap="round" stroke-linejoin="round" stroke-opacity=".95"/>
<path d="M505.0 565.7 L470.0 480.0 L450.0 440.0" fill="none" stroke="#cdb620" stroke-width="9.200" stroke-linecap="round" stroke-linejoin="round" stroke-opacity=".55"/>
<path d="M505.0 565.7 L470.0 480.0 L450.0 440.0" fill="none" stroke="#fade28" stroke-width="7.800" stroke-linecap="round" stroke-linejoin="round" stroke-opacity=".95"/>
<path d="M319.0 464.9 L334.7 538.9 L467.0 440.0" fill="none" stroke="#7dc051" stroke-width="9.200" stroke-linecap="round" stroke-linejoin="round" stroke-opacity=".55"/>
<path d="M319.0 464.9 L334.7 538.9 L467.0 440.0" fill="none" stroke="#99eb63" stroke-width="7.800" stroke-linecap="round" stroke-linejoin="round" stroke-opacity=".95"/>
<path d="M626.0 284.0 L489.7 351.3" fill="none" stroke="#cd871f" stroke-width="9.200" stroke-linecap="round" stroke-linejoin="round" stroke-opacity=".55"/>
<path d="M626.0 284.0 L489.7 351.3" fill="none" stroke="#fba526" stroke-width="7.800" stroke-linecap="round" stroke-linejoin="round" stroke-opacity=".95"/>
<path d="M504.6 304.5 L558.8 321.4 L542.0 373.7 L620.4 370.0 L530.8 388.6 L470.0 400.0" fill="none" stroke="#65c367" stroke-width="9.200" stroke-linecap="round" stroke-linejoin="round" stroke-opacity=".55"/>
<path d="M504.6 304.5 L558.8 321.4 L542.0 373.7 L620.4 370.0 L530.8 388.6 L470.0 400.0" fill="none" stroke="#7cee7e" stroke-width="7.800" stroke-linecap="round" stroke-linejoin="round" stroke-opacity=".95"/>
<path d="M648.5 357.8 L530.8 427.8 L480.0 450.0" fill="none" stroke="#76c156" stroke-width="9.200" stroke-linecap="round" stroke-linejoin="round" stroke-opacity=".55"/>
<path d="M648.5 357.8 L530.8 427.8 L480.0 450.0" fill="none" stroke="#90ec6a" stroke-width="7.800" stroke-linecap="round" stroke-linejoin="round" stroke-opacity=".95"/>
<path d="M654.0 436.3 L527.0 414.8 L470.0 405.0" fill="none" stroke="#97bf3b" stroke-width="9.200" stroke-linecap="round" stroke-linejoin="round" stroke-opacity=".55"/>
<path d="M654.0 436.3 L527.0 414.8 L470.0 405.0" fill="none" stroke="#b9e949" stroke-width="7.800" stroke-linecap="round" stroke-linejoin="round" stroke-opacity=".95"/>
<path d="M543.8 444.7 L474.7 411.0" fill="none" stroke="#bab929" stroke-width="9.200" stroke-linecap="round" stroke-linejoin="round" stroke-opacity=".55"/>
<path d="M543.8 444.7 L474.7 411.0" fill="none" stroke="#e4e232" stroke-width="7.800" stroke-linecap="round" stroke-linejoin="round" stroke-opacity=".95"/>
<path d="M476.6 424.0 L519.6 460.5 L497.0 508.0" fill="none" stroke="#70c15c" stroke-width="9.200" stroke-linecap="round" stroke-linejoin="round" stroke-opacity=".55"/>
<path d="M476.6 424.0 L519.6 460.5 L497.0 508.0" fill="none" stroke="#89ec71" stroke-width="7.800" stroke-linecap="round" stroke-linejoin="round" stroke-opacity=".95"/>
<path d="M540.0 287.7 L474.7 345.6 L446.7 414.8 L430.0 470.0" fill="none" stroke="#3cc78c" stroke-width="9.200" stroke-linecap="round" stroke-linejoin="round" stroke-opacity=".55"/>
<path d="M540.0 287.7 L474.7 345.6 L446.7 414.8 L430.0 470.0" fill="none" stroke="#4af3ab" stroke-width="7.800" stroke-linecap="round" stroke-linejoin="round" stroke-opacity=".95"/>
<path d="M542.0 302.7 L461.0 376.0" fill="none" stroke="#8cbf44" stroke-width="9.200" stroke-linecap="round" stroke-linejoin="round" stroke-opacity=".55"/>
<path d="M542.0 302.7 L461.0 376.0" fill="none" stroke="#abea54" stroke-width="7.800" stroke-linecap="round" stroke-linejoin="round" stroke-opacity=".95"/>
<path d="M540.0 351.0 L512.0 381.0 L470.0 395.0" fill="none" stroke="#cd761d" stroke-width="9.200" stroke-linecap="round" stroke-linejoin="round" stroke-opacity=".55"/>
<path d="M540.0 351.0 L512.0 381.0 L470.0 395.0" fill="none" stroke="#fa9124" stroke-width="7.800" stroke-linecap="round" stroke-linejoin="round" stroke-opacity=".95"/>
<path d="M490.0 369.0 L497.0 371.0" fill="none" stroke="#d10000" stroke-width="9.200" stroke-linecap="round" stroke-linejoin="round" stroke-opacity=".55"/>
<path d="M490.0 369.0 L497.0 371.0" fill="none" stroke="#ff0000" stroke-width="7.800" stroke-linecap="round" stroke-linejoin="round" stroke-opacity=".95"/>
<path d="M470.0 392.0 L520.0 384.0" fill="none" stroke="#ce4216" stroke-width="9.200" stroke-linecap="round" stroke-linejoin="round" stroke-opacity=".55"/>
<path d="M470.0 392.0 L520.0 384.0" fill="none" stroke="#fc511b" stroke-width="7.800" stroke-linecap="round" stroke-linejoin="round" stroke-opacity=".95"/>
<path d="M330.0 395.0 L400.0 392.0 L460.0 396.0" fill="none" stroke="#cdb620" stroke-width="9.200" stroke-linecap="round" stroke-linejoin="round" stroke-opacity=".55"/>
<path d="M330.0 395.0 L400.0 392.0 L460.0 396.0" fill="none" stroke="#fade28" stroke-width="7.800" stroke-linecap="round" stroke-linejoin="round" stroke-opacity=".95"/>
<path d="M350.0 470.0 L410.0 400.0 L440.0 360.0" fill="none" stroke="#c5b724" stroke-width="9.200" stroke-linecap="round" stroke-linejoin="round" stroke-opacity=".55"/>
<path d="M350.0 470.0 L410.0 400.0 L440.0 360.0" fill="none" stroke="#f1e02c" stroke-width="7.800" stroke-linecap="round" stroke-linejoin="round" stroke-opacity=".95"/>
<g transform="translate(384 397.600)"><path d="M0 28.500C-3 22-13.500 10-13.500 0A13.500 13.500 0 0 1 13.500 0C13.500 10 3 22 0 28.500z" fill="#fff" stroke="#c9c9c9" stroke-width=".8"/><circle r="7.600" fill="none" stroke="#1a9e4f" stroke-width="1.700"/><circle r="4.300" fill="#1a9e4f"/></g>
<g><rect x="6" y="639.500" width="58" height="18" fill="#fff" fill-opacity=".75"/><path d="M7 639.500v17.500h56v-17.500" fill="none" stroke="#555" stroke-width="2"/><text x="14" y="653.500" font-size="12" fill="#333">10 m</text></g>
<rect x="828" y="645" width="378" height="18" fill="#fff" fill-opacity=".65"/>
<text x="833" y="658" font-size="12" fill="#1a6f9f" textLength="367" lengthAdjust="spacingAndGlyphs">© Mapbox © OpenStreetMap © OpenWeatherMap Improve this map</text>
</svg><!--MAPEND-->
<!-- map overlays -->
<div class="abs" style="left:352px;top:1087px;width:55px;height:55px;background:#fff;border-radius:4px;box-shadow:0 1px 4px rgba(0,0,0,.3)"></div>
<svg class="abs" style="left:366px;top:1100px" width="26" height="28" viewBox="0 0 26 28" fill="none" stroke="#6b7a90"><path d="M3.200 12.600l9.900 6.800 9.800-6.800M3.200 17.500l9.900 8 9.800-8" stroke-width="1.800"/><path d="M9.300 11.800a3.800 3.800 0 0 1 7.600 0" stroke-width="1.300"/><path d="M13.100 1.600l1.500 2.500h-3zM5.300 6.200l2.800.3-1.500 2.300zM20.900 6.200l-2.800.3 1.500 2.300z" fill="#6b7a90" stroke="none"/></svg>
<div class="abs" style="left:352px;top:1153px;width:55px;height:55px;background:#fff;border-radius:4px;box-shadow:0 1px 4px rgba(0,0,0,.3)"></div>
<div class="abs" style="left:366px;top:1167px;width:26.500px;height:26.500px;background:#edf1f5;border-radius:2px"></div>
<svg class="abs" style="left:368px;top:1169px" width="23" height="23" viewBox="0 0 23 23" stroke="#2f3b4c" stroke-width="1.900" fill="none"><path d="M1.200 4.600h10.300M14.900 4.600h6M16 1.200v6M1.200 11h6.100M6.900 8.300v5.400M10.700 11h10.200M1.200 17.800h6.500M10.300 17.800h10.600M11.200 15.200v5.600"/></svg>
<div class="abs" style="left:418px;top:1087px;width:1041px;height:129px;background:#fff"></div>
<div class="abs" style="left:445px;top:1121px;width:215px;font-size:15px;line-height:20px;color:#4b5566;letter-spacing:.48px">Sales Europe Demo 2 (App Only Battery - State of Charge)</div>
<div class="tog" style="left:650px;top:1124px"><i></i></div>
<div class="abs" style="left:712px;top:1113px;width:22px;height:22px;background:linear-gradient(90deg,#ff0000,#ff3000)"></div>
<div class="abs" style="left:747px;top:1117px;font-size:13px;line-height:16px;color:#4b5566;letter-spacing:.25px;white-space:nowrap">0%-11%</div>
<div class="abs" style="left:888px;top:1113px;width:22px;height:22px;background:linear-gradient(90deg,#ff4a10,#ff7800)"></div>
<div class="abs" style="left:923px;top:1117px;font-size:13px;line-height:16px;color:#4b5566;letter-spacing:.25px;white-space:nowrap">11%-22%</div>
<div class="abs" style="left:1064px;top:1113px;width:22px;height:22px;background:linear-gradient(90deg,#ff7a00,#ffa21a)"></div>
<div class="abs" style="left:1099px;top:1117px;font-size:13px;line-height:16px;color:#4b5566;letter-spacing:.25px;white-space:nowrap">22%-34%</div>
<div class="abs" style="left:1240px;top:1113px;width:22px;height:22px;background:linear-gradient(90deg,#ffb000,#ffe400)"></div>
<div class="abs" style="left:1275px;top:1117px;font-size:13px;line-height:16px;color:#4b5566;letter-spacing:.25px;white-space:nowrap">34%-45%</div>
<div class="abs" style="left:712px;top:1147px;width:22px;height:22px;background:linear-gradient(90deg,#ffe600,#cde830)"></div>
<div class="abs" style="left:747px;top:1150px;font-size:13px;line-height:16px;color:#4b5566;letter-spacing:.25px;white-space:nowrap">45%-56%</div>
<div class="abs" style="left:888px;top:1147px;width:22px;height:22px;background:linear-gradient(90deg,#b6ec34,#86f050)"></div>
<div class="abs" style="left:923px;top:1150px;font-size:13px;line-height:16px;color:#4b5566;letter-spacing:.25px;white-space:nowrap">56%-67%</div>
<div class="abs" style="left:1064px;top:1147px;width:22px;height:22px;background:linear-gradient(90deg,#7cf060,#54f28e)"></div>
<div class="abs" style="left:1099px;top:1150px;font-size:13px;line-height:16px;color:#4b5566;letter-spacing:.25px;white-space:nowrap">67%-78%</div>
<div class="abs" style="left:1240px;top:1147px;width:22px;height:22px;background:linear-gradient(90deg,#40f29c,#0cf8bc)"></div>
<div class="abs" style="left:1275px;top:1150px;font-size:13px;line-height:16px;color:#4b5566;letter-spacing:.25px;white-space:nowrap">78%-90%</div>
<div class="abs" style="left:1499px;top:1098px;width:37px;height:37px;background:#fff;border-radius:2px;border-bottom:1px solid #cfcfcf;font-size:18.500px;line-height:32px;text-align:center;color:#444;white-space:nowrap;letter-spacing:0;font-weight:400;-webkit-text-stroke:.3px #444">( · )</div>
<div class="abs" style="left:1499px;top:1146px;width:37px;height:105px;background:#fff;border-radius:4px;border:2px solid #b7b1ae"></div>
<div class="abs" style="left:1501px;top:1181px;width:33px;height:1px;background:#ddd"></div>
<div class="abs" style="left:1501px;top:1215px;width:33px;height:1px;background:#ddd"></div>
<svg class="abs" style="left:1500.500px;top:1148.500px" width="34" height="100" viewBox="0 0 34 100" stroke="#111" fill="none"><path d="M10 16.500h14M17 9.500v14" stroke-width="2.600"/><path d="M10 50h14" stroke-width="2.600"/><path d="M10 81v-5h5M19 76h5v5M24 86v5h-5M15 91h-5v-5" stroke-width="2.400"/></svg>


</body></html>
